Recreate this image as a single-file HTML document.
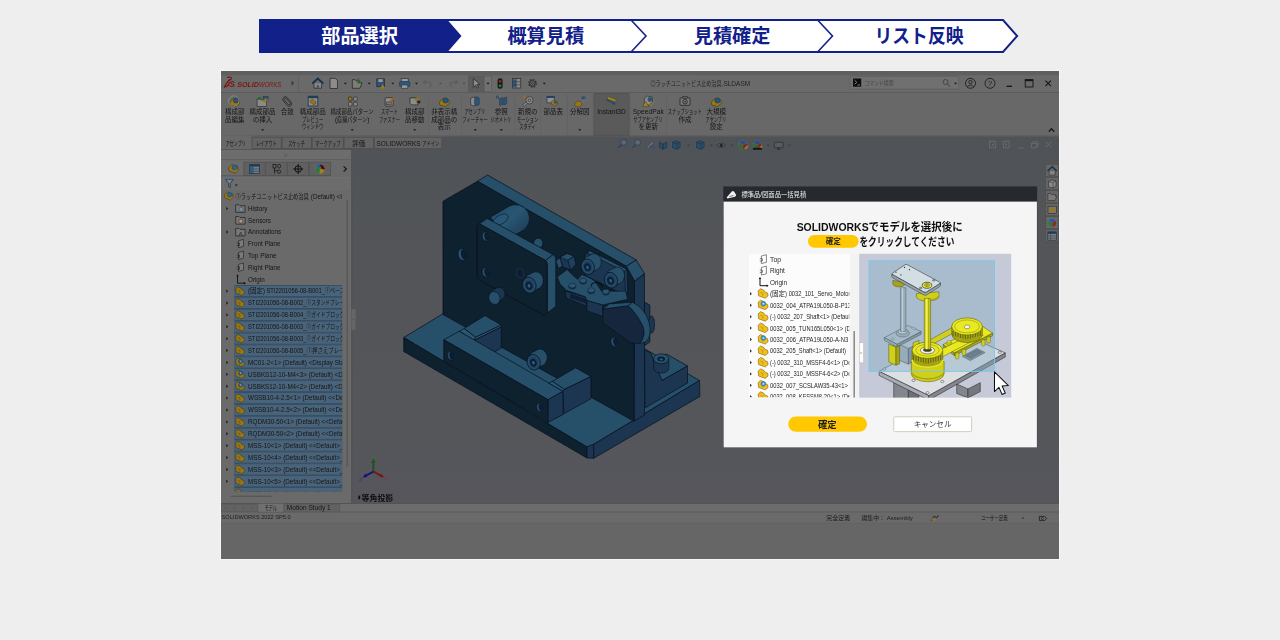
<!DOCTYPE html>
<html><head><meta charset="utf-8"><title>SOLIDWORKS</title>
<style>
html,body{margin:0;padding:0;background:#eeeeee;}
body{width:1280px;height:640px;overflow:hidden;font-family:"Liberation Sans","Noto Sans CJK JP",sans-serif;}
svg{display:block;position:absolute;left:0;top:0;}
svg text{font-family:"Liberation Sans","Noto Sans CJK JP",sans-serif;}
</style></head><body>
<svg width="1280" height="640" viewBox="0 0 1280 640">
<polygon points="259,19 1003.5,19 1018.5,36 1003.5,53 259,53" fill="#ffffff" stroke="none"/>
<polygon points="259,19 448,19 448,20.5 461.5,36 448,51.5 448,53 259,53" fill="#12208a"/>
<polygon points="260,20 1003,20 1017.2,36 1003,52 260,52" fill="none" stroke="#12208a" stroke-width="2" stroke-linejoin="miter"/>
<polyline points="631.5,20.5 646.0,36 631.5,51.5" fill="none" stroke="#12208a" stroke-width="1.6"/>
<polyline points="818,20.5 832.5,36 818,51.5" fill="none" stroke="#12208a" stroke-width="1.6"/>
<text x="321.2" y="43.3" font-size="19.2" font-weight="bold" fill="#ffffff" textLength="76.8" lengthAdjust="spacingAndGlyphs">部品選択</text>
<text x="507.4" y="43.3" font-size="19.2" font-weight="bold" fill="#12208a" textLength="76.8" lengthAdjust="spacingAndGlyphs">概算見積</text>
<text x="693.7" y="43.3" font-size="19.2" font-weight="bold" fill="#12208a" textLength="76.8" lengthAdjust="spacingAndGlyphs">見積確定</text>
<text x="874.5" y="43.3" font-size="19.2" font-weight="bold" fill="#12208a" textLength="89" lengthAdjust="spacingAndGlyphs">リスト反映</text>
<defs><filter id="bl" x="-2%" y="-2%" width="104%" height="104%"><feGaussianBlur stdDeviation="0.33"/></filter><filter id="bl2"><feGaussianBlur stdDeviation="0.25"/></filter><clipPath id="treeclip"><rect x="221" y="150" width="121.2" height="341.3"/></clipPath></defs>
<rect x="220" y="70" width="840" height="490" fill="#f6f6f6" />
<g filter="url(#bl)">
<rect x="221" y="71" width="838" height="488" fill="#676767" />
<rect x="221" y="71" width="838" height="4.5" fill="#5e5e5e" />
<rect x="221" y="75.5" width="838" height="17" fill="#6b6b6b" />
<rect x="221" y="92" width="838" height="1" fill="#5c5c5c" />
<rect x="221" y="93" width="838" height="43" fill="#686868" />
<rect x="221" y="135.5" width="838" height="1" fill="#5a5a5a" />
<rect x="221" y="136.5" width="221" height="12.5" fill="#676767" />
<linearGradient id="vg" gradientUnits="userSpaceOnUse" x1="0" y1="136" x2="0" y2="503"><stop offset="0" stop-color="#505358"/><stop offset="1" stop-color="#56575b"/></linearGradient>
<rect x="442" y="136.5" width="617" height="367" fill="url(#vg)" />
<rect x="352" y="149" width="707" height="354.5" fill="url(#vg)" />
<rect x="221" y="149.5" width="131" height="354" fill="#6a6a6a" />
<rect x="221" y="148.8" width="131" height="1.2" fill="#565656" />
<rect x="351.2" y="149" width="1" height="354" fill="#4c4c4c" />
<rect x="221" y="503.5" width="838" height="8.5" fill="#6c6c6c" />
<rect x="221" y="503" width="838" height="0.8" fill="#4e4e4e" />
<rect x="221" y="512" width="838" height="11" fill="#6b6b6b" />
<rect x="221" y="511.6" width="838" height="0.7" fill="#555" />
<rect x="221" y="522.8" width="838" height="0.7" fill="#5a5a5a" />
<rect x="221" y="523.5" width="838" height="35.5" fill="#666666" />
<g fill="none" stroke="#7e1512" stroke-width="1.25" stroke-linecap="round"><path d="M227.6,77.4q3.4,-1 3.9,0.7q0.1,1.5 -2.5,2.3"/><path d="M229.6,79.6q-2.6,2.6 -5.4,7.6"/><path d="M224.6,86.9q4.2,0 4.6,-4.6"/></g>
<text x="229.3" y="87.3" font-size="8.6" font-weight="bold" font-style="italic" fill="#7e1512">S</text>
<text x="237.2" y="86.6" font-size="7.4" font-weight="bold" font-style="italic" fill="#7e1512" textLength="21.6" lengthAdjust="spacingAndGlyphs">SOLID</text>
<text x="258.9" y="86.6" font-size="7.4" font-style="italic" fill="#7e1512" textLength="22.4" lengthAdjust="spacingAndGlyphs">WORKS</text>
<path d="M291.5,80.5l2.6,2.7l-2.6,2.7z" fill="#3a3a3a"/>
<rect x="298" y="76" width="0.8" height="16" fill="#5e5e5e" />
<path d="M312.3,83.5l5.5,-5l5.5,5" fill="none" stroke="#17304a" stroke-width="1.7"/><path d="M314,83.5v4.7h7.6v-4.7" fill="#8a8a8a" stroke="#2a2a2a" stroke-width="0.8"/><rect x="316.6" y="85" width="2.4" height="3.2" fill="#555"/>
<path d="M330,78.3h5.2l2.3,2.4v7.8h-7.5z" fill="#8c8c8c" stroke="#2a2a2a" stroke-width="0.8"/>
<path d="M343.8,82.8h3l-1.5,1.7z" fill="#141414"/>
<path d="M352.3,88.3v-8.6h3l1,1.2h3.2v2h2.6l-2.2,5.4z" fill="#7d7d78" stroke="#2a2a2a" stroke-width="0.8"/><path d="M357.6,78.2v3.4l-1.3,0l2.1,2.3l2.1,-2.3h-1.3v-3.4z" fill="#2c6a2c"/>
<path d="M367.7,82.8h3l-1.5,1.7z" fill="#141414"/>
<rect x="376.8" y="78.8" width="7.6" height="8" fill="#2d4f78" stroke="#222" stroke-width="0.6"/><rect x="378.3" y="79.2" width="4.4" height="2.8" fill="#999"/><path d="M380,88.6l2.6,-4.6l2.6,4.6z" fill="#9a7a14"/>
<path d="M391.3,82.8h3l-1.5,1.7z" fill="#141414"/>
<rect x="401.2" y="78.6" width="7" height="3.4" fill="#989898" stroke="#2a2a2a" stroke-width="0.6"/><rect x="399.6" y="81.6" width="10.2" height="5" rx="1" fill="#2d5a85" stroke="#1b2d44" stroke-width="0.6"/><rect x="401.6" y="85" width="6.2" height="3.2" fill="#9a9a9a" stroke="#2a2a2a" stroke-width="0.5"/>
<path d="M415.0,82.8h3l-1.5,1.7z" fill="#141414"/>
<path d="M425.3,80.2l-2,2.2l2.6,1.2 M423.6,82.2h5q2.6,0.4 2.4,3q-0.4,1.6 -2.2,2" fill="none" stroke="#5b5b5b" stroke-width="1.2"/>
<path d="M438.9,82.8h3l-1.5,1.7z" fill="#4a4a4a"/>
<path d="M455.8,80.2l2,2.2l-2.6,1.2 M457.5,82.2h-5q-2.6,0.4 -2.4,3q0.4,1.6 2.2,2" fill="none" stroke="#5b5b5b" stroke-width="1.2"/>
<path d="M462.5,82.8h3l-1.5,1.7z" fill="#4a4a4a"/>
<rect x="468.3" y="76.2" width="15.8" height="15.2" fill="#5c5c5c" stroke="#555" stroke-width="0.5"/><rect x="484.1" y="76.2" width="7.2" height="15.2" fill="#6f6f6f" stroke="#585858" stroke-width="0.5"/>
<path d="M473.3,78.6v8.6l2.2,-2l1.6,3l1.3,-0.7l-1.5,-2.9l2.9,-0.3z" fill="#8d8d8d" stroke="#222" stroke-width="0.7"/>
<path d="M486.5,82.8h3l-1.5,1.7z" fill="#141414"/>
<rect x="497.6" y="78.2" width="5" height="10.6" rx="2.5" fill="#151515"/><circle cx="500.1" cy="81.2" r="1.5" fill="#8c2a22"/><circle cx="500.1" cy="85.8" r="1.5" fill="#2c7a36"/>
<rect x="512.4" y="78.6" width="8.4" height="9.4" fill="#888" stroke="#2a2a2a" stroke-width="0.7"/><rect x="513" y="79.3" width="3" height="8" fill="#2d5a85"/><path d="M512.4,81.8h8.4M512.4,84.8h8.4M516.3,78.6v9.4" stroke="#2a2a2a" stroke-width="0.5"/>
<circle cx="532.5" cy="83.3" r="3.6" fill="none" stroke="#2a2a2a" stroke-width="1.5" stroke-dasharray="1.6 1.2"/><circle cx="532.5" cy="83.3" r="2.7" fill="none" stroke="#2a2a2a" stroke-width="0.8"/><circle cx="532.5" cy="83.3" r="1.1" fill="none" stroke="#2a2a2a" stroke-width="0.6"/>
<path d="M542.8,82.8h3l-1.5,1.7z" fill="#141414"/>
<text x="650.5" y="85.8" font-size="6.5" fill="#222" textLength="71" lengthAdjust="spacingAndGlyphs">◎ラッチユニットビス止め治具</text>
<text x="721.61" y="85.8" font-size="6.5" fill="#222" font-weight="normal" text-anchor="start"  xml:space="preserve">.SLDASM</text>
<rect x="850.3" y="76.3" width="108.5" height="13" rx="1" fill="#6f6f6f" stroke="#5a5a5a" stroke-width="0.6"/><rect x="853" y="78.5" width="8.2" height="8.2" fill="#0e0e0e"/><path d="M854.6,80.3l2.2,2l-2.2,2M857.5,85h2.5" stroke="#999" stroke-width="0.8" fill="none"/>
<text x="864.5" y="85.3" font-size="6.2" fill="#484848" textLength="29" lengthAdjust="spacingAndGlyphs">コマンド検索</text>
<circle cx="945.6" cy="82" r="2.5" fill="none" stroke="#3f3f3f" stroke-width="0.8"/><path d="M947.4,83.9l2.6,2.8" stroke="#3f3f3f" stroke-width="1"/>
<path d="M954.1,82.8h3l-1.5,1.7z" fill="#141414"/>
<circle cx="970.5" cy="83.3" r="5" fill="none" stroke="#1c1c1c" stroke-width="0.9"/><circle cx="970.5" cy="82" r="1.7" fill="none" stroke="#1c1c1c" stroke-width="0.8"/><path d="M967.3,87q3.2,-4 6.4,0" fill="none" stroke="#1c1c1c" stroke-width="0.8"/>
<circle cx="990" cy="83.3" r="5" fill="none" stroke="#1c1c1c" stroke-width="0.9"/><text x="990" y="86.3" font-size="8" text-anchor="middle" fill="#1c1c1c">?</text>
<path d="M1006.6,86.3h5.4" stroke="#151515" stroke-width="1.3"/>
<rect x="1025.2" y="79.6" width="7.8" height="7.4" fill="none" stroke="#151515" stroke-width="0.9"/><path d="M1025.2,80.4h7.8" stroke="#151515" stroke-width="1.6"/>
<path d="M1045.4,80.6l5.6,5.6M1051,80.6l-5.6,5.6" stroke="#151515" stroke-width="1.1"/>
<rect x="594" y="93.3" width="35" height="42" fill="#5a5a5a" stroke="#4e4e4e" stroke-width="0.7"/>
<rect x="428.2" y="94" width="0.8" height="41" fill="#626262" />
<rect x="461" y="94" width="0.8" height="41" fill="#626262" />
<rect x="514.6" y="94" width="0.8" height="41" fill="#626262" />
<rect x="540.2" y="94" width="0.8" height="41" fill="#626262" />
<rect x="566.8" y="94" width="0.8" height="41" fill="#626262" />
<rect x="592.7" y="94" width="0.8" height="41" fill="#626262" />
<rect x="630.3" y="94" width="0.8" height="41" fill="#626262" />
<rect x="666.2" y="94" width="0.8" height="41" fill="#626262" />
<path d="M229.8,102.0l4,-3.5l5.5,1.5l0.5,3.5l-4,3l-5.5,-1.5z" fill="#9a7612" stroke="#3a2c08" stroke-width="0.5"/><circle cx="236.0" cy="100.5" r="2.6" fill="#2a5579" stroke="#1a2e44" stroke-width="0.5"/>
<circle cx="233.8" cy="101.0" r="5.2" fill="none" stroke="#8f8f8f" stroke-width="0.7"/>
<text x="225.05" y="114.3" font-size="6.5" fill="#151515" textLength="19.5" lengthAdjust="spacingAndGlyphs">構成部</text>
<text x="225.05" y="121.7" font-size="6.5" fill="#151515" textLength="19.5" lengthAdjust="spacingAndGlyphs">品編集</text>
<path d="M257.1,106.5v-7.5h3.5l1,1h5v6.5z" fill="#8a8a86" stroke="#222" stroke-width="0.6"/><rect x="263.1" y="96.3" width="5" height="4" fill="#2a5579" stroke="#1a2e44" stroke-width="0.4"/><path d="M258.1,97.0h3v3h-3z" fill="#2d6a2d"/><path d="M261.6,101.0l4,-2.5l2.5,1l-3,3z" fill="#9a7612"/>
<text x="249.6" y="114.3" font-size="6.5" fill="#151515" textLength="26" lengthAdjust="spacingAndGlyphs">構成部品</text>
<text x="252.85" y="121.7" font-size="6.5" fill="#151515" textLength="19.5" lengthAdjust="spacingAndGlyphs">の挿入</text>
<path d="M261.1,129.3h3l-1.5,1.7z" fill="#141414"/>
<g fill="none" stroke="#303030" stroke-width="0.9" transform="rotate(-40 287.2 101.5)"><rect x="284.59999999999997" y="96.0" width="5.2" height="11" rx="2.6"/><rect x="286.0" y="97.7" width="2.6" height="8" rx="1.3"/></g>
<text x="280.7" y="114.3" font-size="6.5" fill="#151515" textLength="13" lengthAdjust="spacingAndGlyphs">合致</text>
<rect x="308.2" y="96.2" width="9.6" height="9.8" fill="#8d8d8d" stroke="#1e3a58" stroke-width="0.9"/><rect x="308.2" y="96.2" width="9.6" height="2" fill="#1e3a58"/><path d="M310.3,100.5l2,-1.4l3.4,2.4l0.2,2.2l-2.2,1l-3.4,-2.4z" fill="#9a7612" stroke="#3a2c08" stroke-width="0.4"/>
<text x="299.8" y="114.3" font-size="6.5" fill="#151515" textLength="26" lengthAdjust="spacingAndGlyphs">構成部品</text>
<text x="302.07" y="121.7" font-size="6.5" fill="#151515" textLength="21.2" lengthAdjust="spacingAndGlyphs">プレビュー</text>
<text x="302.07" y="129.1" font-size="6.5" fill="#151515" textLength="21.2" lengthAdjust="spacingAndGlyphs">ウィンドウ</text>
<rect x="348.4" y="97.1" width="3.6" height="3.8" rx="0.9" fill="#9a7612" stroke="#222" stroke-width="0.6"/>
<rect x="353.59999999999997" y="97.1" width="3.6" height="3.8" rx="0.9" fill="#8a8a8a" stroke="#222" stroke-width="0.6"/>
<rect x="348.4" y="102.3" width="3.6" height="3.8" rx="0.9" fill="#8a8a8a" stroke="#222" stroke-width="0.6"/>
<rect x="353.59999999999997" y="102.3" width="3.6" height="3.8" rx="0.9" fill="#8a8a8a" stroke="#222" stroke-width="0.6"/>
<text x="330.62" y="114.3" font-size="6.5" fill="#151515" textLength="43" lengthAdjust="spacingAndGlyphs">構成部品パターン</text>
<text x="334.96" y="121.7" font-size="6.5" fill="#151515" font-weight="normal" text-anchor="start"  xml:space="preserve">(</text>
<text x="337.12" y="121.7" font-size="6.5" fill="#151515" textLength="30" lengthAdjust="spacingAndGlyphs">直線パターン</text>
<text x="367.28" y="121.7" font-size="6.5" fill="#151515" font-weight="normal" text-anchor="start"  xml:space="preserve">)</text>
<path d="M350.7,129.3h3l-1.5,1.7z" fill="#141414"/>
<rect x="385.1" y="97.7" width="8" height="8.4" rx="1" fill="#8d8d8d" stroke="#222" stroke-width="0.7"/><path d="M387.1,104.0l6.5,-7l1.2,1.2l-6.2,7z" fill="#a85f14"/><rect x="386.6" y="102.0" width="4.6" height="2.8" fill="#777" stroke="#222" stroke-width="0.4"/>
<text x="381.02" y="114.3" font-size="6.5" fill="#151515" textLength="16.6" lengthAdjust="spacingAndGlyphs">スマート</text>
<text x="378.88" y="121.7" font-size="6.5" fill="#151515" textLength="21.2" lengthAdjust="spacingAndGlyphs">ファスナー</text>
<path d="M410.0,97.9h6.2l1.6,1.6v5.4h-6.2l-1.6,-1.6z" fill="#8d8d8d" stroke="#222" stroke-width="0.7"/><path d="M413.8,99.9l3.8,-2.4l2.4,1.4l-3.8,2.4z" fill="#9a7612"/><path d="M415.8,102.0l3,-1v-1l2,2l-2,2v-1z" fill="#222"/>
<text x="405.05" y="114.3" font-size="6.5" fill="#151515" textLength="19.5" lengthAdjust="spacingAndGlyphs">構成部</text>
<text x="405.05" y="121.7" font-size="6.5" fill="#151515" textLength="19.5" lengthAdjust="spacingAndGlyphs">品移動</text>
<path d="M413.3,129.3h3l-1.5,1.7z" fill="#141414"/>
<path d="M439.3,102.0l4,-3.5l5.5,1.5l0.5,3.5l-4,3l-5.5,-1.5z" fill="#9a7612" stroke="#3a2c08" stroke-width="0.5"/><circle cx="445.5" cy="100.5" r="2.6" fill="#2a5579" stroke="#1a2e44" stroke-width="0.5"/>
<text x="431.3" y="114.3" font-size="6.5" fill="#151515" textLength="26" lengthAdjust="spacingAndGlyphs">非表示構</text>
<text x="431.3" y="121.7" font-size="6.5" fill="#151515" textLength="26" lengthAdjust="spacingAndGlyphs">成部品の</text>
<text x="437.8" y="129.1" font-size="6.5" fill="#151515" textLength="13" lengthAdjust="spacingAndGlyphs">表示</text>
<path d="M470.59999999999997,98.5l3,-1.6l3,1.6v6l-3,1.6l-3,-1.6z" fill="#8a8a8a" stroke="#222" stroke-width="0.6"/><rect x="474.59999999999997" y="96.9" width="4.6" height="8.6" rx="2" fill="#2a5579" stroke="#1a2e44" stroke-width="0.5"/>
<text x="464.47" y="114.3" font-size="6.5" fill="#151515" textLength="20.6" lengthAdjust="spacingAndGlyphs">アセンブリ</text>
<text x="462.33" y="121.7" font-size="6.5" fill="#151515" textLength="25.4" lengthAdjust="spacingAndGlyphs">フィーチャー</text>
<path d="M473.7,129.3h3l-1.5,1.7z" fill="#141414"/>
<path d="M499.7,98.7l3,-1.2v7l-3,1.2z M503.7,98.1l3,-1.2v7l-3,1.2z" fill="#2a5579" stroke="#1a2e44" stroke-width="0.4"/><circle cx="497.3" cy="97.1" r="1.1" fill="none" stroke="#1e3a58" stroke-width="0.7"/><path d="M498.1,98.0l2,2.2" stroke="#1e3a58" stroke-width="0.6"/>
<text x="494.8" y="114.3" font-size="6.5" fill="#151515" textLength="13" lengthAdjust="spacingAndGlyphs">参照</text>
<text x="490.57" y="121.7" font-size="6.5" fill="#151515" textLength="20.6" lengthAdjust="spacingAndGlyphs">ジオメトリ</text>
<path d="M499.8,129.3h3l-1.5,1.7z" fill="#141414"/>
<circle cx="529.4" cy="100.3" r="3.7" fill="#858585" stroke="#333" stroke-width="0.7"/><circle cx="529.4" cy="100.3" r="1.3" fill="none" stroke="#333" stroke-width="0.6"/><path d="M522.8,104.9l3,-3l1.6,1.6l-3,3z" fill="#858585" stroke="#333" stroke-width="0.6"/><circle cx="524.3" cy="97.2" r="1.4" fill="#a06a18"/>
<text x="518.05" y="114.3" font-size="6.5" fill="#151515" textLength="19.5" lengthAdjust="spacingAndGlyphs">新規の</text>
<text x="517.07" y="121.7" font-size="6.5" fill="#151515" textLength="21.2" lengthAdjust="spacingAndGlyphs">モーション</text>
<text x="519.22" y="129.1" font-size="6.5" fill="#151515" textLength="16.4" lengthAdjust="spacingAndGlyphs">スタディ</text>
<rect x="547.0" y="96.3" width="7.6" height="6.6" fill="#8f8f8f" stroke="#1e3a58" stroke-width="0.7"/><rect x="547.0" y="96.3" width="7.6" height="1.6" fill="#1e3a58"/><path d="M551.2,101.7l2.6,-1.8l3.8,2.2v2.2l-2.6,1.6l-3.8,-2.2z" fill="#9a7612" stroke="#3a2c08" stroke-width="0.4"/><circle cx="555.4000000000001" cy="102.3" r="1.5" fill="#2a5579"/>
<text x="543.45" y="114.3" font-size="6.5" fill="#151515" textLength="19.5" lengthAdjust="spacingAndGlyphs">部品表</text>
<path d="M574.8,103.5l3,-2.6l4,1.4v2.6l-3,2.2l-4,-1.4z" fill="#9a7612" stroke="#3a2c08" stroke-width="0.4"/><path d="M581.1999999999999,97.1l2,-1.2l2.4,0.8v1.6l-2,1.2l-2.4,-0.8z" fill="#2a5579"/><path d="M583.0,99.9v2.4h-1.4" fill="none" stroke="#7a7a7a" stroke-width="0.5"/>
<text x="570.05" y="114.3" font-size="6.5" fill="#151515" textLength="19.5" lengthAdjust="spacingAndGlyphs">分解図</text>
<path d="M578.3,129.3h3l-1.5,1.7z" fill="#141414"/>
<path d="M607.5,96.5l8.4,3v2.6l-8.4,-3z" fill="#a08a1c" stroke="#4a3c08" stroke-width="0.4"/><path d="M606.3,99.7l7.6,3.4" stroke="#1e4a78" stroke-width="1.3"/><path d="M612.9,101.7l3.6,2.6l-4.4,0.2z" fill="#1e4a78"/>
<text x="611.5" y="114.3" font-size="6.7" fill="#151515" font-weight="normal" text-anchor="middle" >Instant3D</text>
<path d="M644.3,98.5l3.4,-2.4l4.6,1v5.6l-3.4,2.4l-4.6,-1z" fill="#8d8d8d" stroke="#222" stroke-width="0.6"/><circle cx="649.9" cy="99.5" r="2.4" fill="#2a5579"/><path d="M642.6999999999999,106.5l3,-5.2l3,5.2z" fill="#a48414" stroke="#2a2a2a" stroke-width="0.4"/><path d="M648.9,103.5l2,1.8l3,-3.6" fill="none" stroke="#a48414" stroke-width="1"/>
<text x="648.3" y="114.3" font-size="6.7" fill="#151515" font-weight="normal" text-anchor="middle" >SpeedPak</text>
<text x="633.28" y="121.7" font-size="6.5" fill="#151515" textLength="29.2" lengthAdjust="spacingAndGlyphs">サブアセンブリ</text>
<text x="638.55" y="129.1" font-size="6.5" fill="#151515" textLength="19.5" lengthAdjust="spacingAndGlyphs">を更新</text>
<rect x="680" y="97.9" width="10" height="7.4" rx="0.8" fill="#7b7b7b" stroke="#222" stroke-width="0.8"/><rect x="683" y="96.5" width="4" height="1.6" fill="#7b7b7b" stroke="#222" stroke-width="0.6"/><circle cx="685" cy="101.7" r="2.3" fill="none" stroke="#222" stroke-width="0.8"/><circle cx="685" cy="101.7" r="0.8" fill="#222"/>
<text x="667.84" y="114.3" font-size="6.5" fill="#151515" textLength="33.8" lengthAdjust="spacingAndGlyphs">スナップショット</text>
<text x="678.5" y="121.7" font-size="6.5" fill="#151515" textLength="13" lengthAdjust="spacingAndGlyphs">作成</text>
<path d="M711.3,102.0l4,-3.5l5.5,1.5l0.5,3.5l-4,3l-5.5,-1.5z" fill="#9a7612" stroke="#3a2c08" stroke-width="0.5"/><circle cx="717.5" cy="100.5" r="2.6" fill="#2a5579" stroke="#1a2e44" stroke-width="0.5"/>
<text x="706.55" y="114.3" font-size="6.5" fill="#151515" textLength="19.5" lengthAdjust="spacingAndGlyphs">大規模</text>
<text x="705.57" y="121.7" font-size="6.5" fill="#151515" textLength="20.6" lengthAdjust="spacingAndGlyphs">アセンブリ</text>
<text x="709.8" y="129.1" font-size="6.5" fill="#151515" textLength="13" lengthAdjust="spacingAndGlyphs">設定</text>
<path d="M1048.8,131.6l2.7,-2.8l2.7,2.8" fill="none" stroke="#151515" stroke-width="1.3"/>
<rect x="221" y="135.5" width="30.19999999999999" height="13.5" fill="#686868" />
<text x="225.38" y="145.6" font-size="6.5" fill="#151515" textLength="20.6" lengthAdjust="spacingAndGlyphs">アセンブリ</text>
<rect x="252" y="137.2" width="29.30000000000001" height="11.4" fill="#636363" stroke="#4c4c4c" stroke-width="0.8"/>
<text x="255.92" y="145.6" font-size="6.5" fill="#151515" textLength="20.8" lengthAdjust="spacingAndGlyphs">レイアウト</text>
<rect x="282" y="137.2" width="29.5" height="11.4" fill="#636363" stroke="#4c4c4c" stroke-width="0.8"/>
<text x="288.17" y="145.6" font-size="6.5" fill="#151515" textLength="16.8" lengthAdjust="spacingAndGlyphs">スケッチ</text>
<rect x="312.2" y="137.2" width="31.100000000000023" height="11.4" fill="#636363" stroke="#4c4c4c" stroke-width="0.8"/>
<text x="314.88" y="145.6" font-size="6.5" fill="#151515" textLength="25.7" lengthAdjust="spacingAndGlyphs">マークアップ</text>
<rect x="344" y="137.2" width="29.5" height="11.4" fill="#636363" stroke="#4c4c4c" stroke-width="0.8"/>
<text x="352.25" y="145.6" font-size="6.5" fill="#151515" textLength="13" lengthAdjust="spacingAndGlyphs">評価</text>
<rect x="374.2" y="137.2" width="67.60000000000002" height="11.4" fill="#636363" stroke="#4c4c4c" stroke-width="0.8"/>
<text x="376.49" y="145.6" font-size="6.5" fill="#151515" font-weight="normal" text-anchor="start"  xml:space="preserve">SOLIDWORKS </text>
<text x="422.35" y="145.6" font-size="6.5" fill="#151515" textLength="17" lengthAdjust="spacingAndGlyphs">アドイン</text>
<g transform="translate(0,0.8)">
<circle cx="623.7" cy="141.6" r="3" fill="#5d6670" stroke="#27425e" stroke-width="0.8"/><path d="M621.5,144l-3,3" stroke="#27425e" stroke-width="1.3"/>
<circle cx="637.7" cy="141.6" r="3" fill="#5d6670" stroke="#27425e" stroke-width="0.8"/><path d="M635.5,144l-3,3" stroke="#27425e" stroke-width="1.3"/>
<path d="M646,147l6,-6.4l2,1.4l-5,5.6z" fill="#6a7076" stroke="#2a3a4a" stroke-width="0.5"/><path d="M654,146h-4.5l1.5,-1.6" fill="none" stroke="#27527e" stroke-width="1"/>
<path d="M659.5,141.4l3,1.6v5.4l-3,-1.6z M663.4,143l3.4,-1.8v5.4l-3.4,1.8z" fill="#27506e" stroke="#16283a" stroke-width="0.5"/>
<path d="M672.5,141.6l3,-1.6l4.6,1.4v5.2l-3,1.8l-4.6,-1.4z" fill="#28506e" stroke="#16283a" stroke-width="0.5"/><path d="M672.5,141.6l4.6,1.4l3,-1.6 M677.1,143v5.4" fill="none" stroke="#16283a" stroke-width="0.5"/>
<path d="M696.5,141.6l3,-1.6l4.6,1.4v5.2l-3,1.8l-4.6,-1.4z" fill="#28506e" stroke="#16283a" stroke-width="0.5"/><path d="M696.5,141.6l4.6,1.4l3,-1.6 M701.1,143v5.4" fill="none" stroke="#16283a" stroke-width="0.5"/>
<path d="M687.0,143.9h3l-1.5,1.7z" fill="#3a3c40"/>
<path d="M710.0,143.9h3l-1.5,1.7z" fill="#3a3c40"/>
<path d="M730.5,143.9h3l-1.5,1.7z" fill="#3a3c40"/>
<path d="M766.5,143.9h3l-1.5,1.7z" fill="#3a3c40"/>
<path d="M788.0,143.9h3l-1.5,1.7z" fill="#3a3c40"/>
<path d="M716.5,144.6q4.5,-4.4 9,0q-4.5,4 -9,0z" fill="#5b5e62" stroke="#2d2f33" stroke-width="0.7"/><circle cx="721.3" cy="144.6" r="1.7" fill="#26282c"/>
<circle cx="742.8" cy="144.2" r="4.2" fill="#8f8f8f"/><path d="M742.8,144.2l-3.7,-2a4.2,4.2 0 0 1 7.4,0z" fill="#2a4f8a"/><path d="M742.8,144.2l3.7,-2a4.2,4.2 0 0 1 -3.7,6.2z" fill="#7a2a24"/><path d="M742.8,144.2v4.2a4.2,4.2 0 0 1 -3.7,-6.2z" fill="#2d6a34"/><path d="M744.3,147.5l3,-2.8l1.2,1.2l-3,2.8z" fill="#a08214"/>
<circle cx="757.2" cy="144.2" r="4.2" fill="#8f8f8f"/><path d="M757.2,144.2l-3.7,-2a4.2,4.2 0 0 1 7.4,0z" fill="#2a4f8a"/><path d="M757.2,144.2l3.7,-2a4.2,4.2 0 0 1 -3.7,6.2z" fill="#7a2a24"/><path d="M757.2,144.2v4.2a4.2,4.2 0 0 1 -3.7,-6.2z" fill="#2d6a34"/><path d="M758.7,147.5l3,-2.8l1.2,1.2l-3,2.8z" fill="#a08214"/>
<rect x="753" y="147" width="9" height="2" fill="#18191b"/>
<rect x="774.3" y="141.4" width="8.8" height="5.6" rx="0.8" fill="#595c61" stroke="#303236" stroke-width="0.9"/><path d="M777,149l1.7,-2l1.7,2z" fill="#26282c"/>
</g>
<g fill="none" stroke="#6b6e73" stroke-width="0.8"><rect x="989.5" y="141.2" width="5.8" height="6.6"/><rect x="1003.3" y="141.2" width="5.8" height="6.6"/><path d="M1018.5,148h5"/><rect x="1031.3" y="143.4" width="5" height="4.4"/><path d="M1033,143.4v-1.6h5v4.4h-1.7"/><path d="M1046,141.6l5.4,5.6M1051.4,141.6l-5.4,5.6"/></g>
<path d="M993.6,143.2l-2,1.4l2,1.4z M1005.3,143.2l2,1.4l-2,1.4z" fill="#6b6e73"/>
<rect x="221" y="150" width="130" height="9.3" fill="#6d6d6d" />
<rect x="221" y="159.3" width="130" height="0.7" fill="#5c5c5c" />
<circle cx="285.7" cy="155.4" r="1.3" fill="none" stroke="#555" stroke-width="0.6"/>
<rect x="221" y="162" width="23" height="14" fill="#6c6c6c" />
<rect x="243.8" y="162.2" width="21.4" height="13.2" fill="#606060" stroke="#515151" stroke-width="0.7"/>
<rect x="265.7" y="162.2" width="21.4" height="13.2" fill="#606060" stroke="#515151" stroke-width="0.7"/>
<rect x="287.5" y="162.2" width="21.4" height="13.2" fill="#606060" stroke="#515151" stroke-width="0.7"/>
<rect x="309.3" y="162.2" width="21.4" height="13.2" fill="#606060" stroke="#515151" stroke-width="0.7"/>
<path d="M221,175.7h110" stroke="#515151" stroke-width="0.7"/>
<g transform="translate(233.5,169) scale(1.05)"><path d="M-4.8,-1.2l3.2,-3l5.6,2l0.8,3.2l-3.2,3l-5.6,-2z" fill="#96761a" stroke="#3d2e06" stroke-width="0.5"/><path d="M-1.4,-2.6l2.2,-1.4l2.6,1v2.6l-2.2,1.4l-2.6,-1z" fill="#2a6690" stroke="#193650" stroke-width="0.4"/></g>
<rect x="249.5" y="164.6" width="10" height="8.8" fill="#7c7c7c" stroke="#1e3a58" stroke-width="0.8"/><rect x="249.5" y="164.6" width="10" height="2" fill="#1e3a58"/><path d="M249.5,169h10M249.5,171.3h10M253,166.6v6.8" stroke="#1e3a58" stroke-width="0.6"/><rect x="250" y="167" width="2.8" height="6" fill="#2a5c86"/>
<g fill="none" stroke="#1c1c1c" stroke-width="0.8"><rect x="273" y="164.4" width="3" height="3.6"/><rect x="277.6" y="164.4" width="3" height="3.6" rx="1.4"/><path d="M274.5,168v5.6M274.5,170.6h3.2"/><circle cx="279" cy="171.6" r="1.7"/></g>
<g fill="none" stroke="#111" stroke-width="1"><circle cx="298.2" cy="169" r="3.2"/><path d="M298.2,164v10M293.2,169h10"/></g>
<circle cx="320" cy="168.8" r="4.6" fill="#8a8a8a"/><path d="M320,168.8l-4,-2.3a4.6,4.6 0 0 1 6,-1.9z" fill="#2a5a9a"/><path d="M320,168.8l2,-4.2a4.6,4.6 0 0 1 2.5,5.4z" fill="#8a2620"/><path d="M320,168.8l4.5,1.2a4.6,4.6 0 0 1 -5,3.4z" fill="#a08214"/><path d="M320,168.8l-0.5,4.6a4.6,4.6 0 0 1 -3.5,-6.9z" fill="#2d7a34"/><path d="M320.5,165l3.5,4" stroke="#111" stroke-width="1.4"/>
<path d="M343.6,166.4l2.8,2.6l-2.8,2.6" fill="none" stroke="#151515" stroke-width="1.1"/>
<rect x="223.8" y="177.3" width="125" height="11.6" fill="#6c6c6c" stroke="#747474" stroke-width="0.7"/>
<path d="M225.6,179.6h7.6l-3,3.6v4.4l-1.6,-1v-3.4z" fill="#7d8890" stroke="#1e3246" stroke-width="0.8"/><path d="M225.4,179.4h8" stroke="#2a5a84" stroke-width="1.2"/>
<path d="M234.7,184.5h3l-1.5,1.7z" fill="#141414"/>
<g transform="translate(228.8,196.2) scale(0.95)"><path d="M-4.8,-1.2l3.2,-3l5.6,2l0.8,3.2l-3.2,3l-5.6,-2z" fill="#96761a" stroke="#3d2e06" stroke-width="0.5"/><path d="M-1.4,-2.6l2.2,-1.4l2.6,1v2.6l-2.2,1.4l-2.6,-1z" fill="#2a6690" stroke="#193650" stroke-width="0.4"/></g>
<g clip-path="url(#treeclip)">
<text x="235.6" y="198.9" font-size="6.5" fill="#151515" textLength="73.2" lengthAdjust="spacingAndGlyphs">①ラッチユニットビス止め治具</text>
<text x="309.05" y="198.9" font-size="6.5" fill="#151515" font-weight="normal" text-anchor="start"  xml:space="preserve" textLength="32.94" lengthAdjust="spacingAndGlyphs"> (Default) &lt;I</text>
<path d="M226.3,206.73l1.9,1.7l-1.9,1.7z" fill="#1a1a1a"/>
<path d="M235.7,212.32999999999998v-7.6h3.2l1,1h5.2v6.6z" fill="#787878" stroke="#1c1c1c" stroke-width="0.7"/><circle cx="241.1" cy="209.32999999999998" r="2.2" fill="#8a8a8a" stroke="#2a5a84" stroke-width="0.7"/>
<text x="248" y="210.73" font-size="6.5" fill="#151515" font-weight="normal" text-anchor="start"  xml:space="preserve" textLength="19.52" lengthAdjust="spacingAndGlyphs">History</text>
<path d="M235.7,224.14v-7.6h3.2l1,1h5.2v6.6z" fill="#787878" stroke="#1c1c1c" stroke-width="0.7"/><circle cx="240.9" cy="221.14" r="2.2" fill="#9a9a9a" stroke="#6a2a20" stroke-width="0.7"/>
<text x="248" y="222.54" font-size="6.5" fill="#151515" font-weight="normal" text-anchor="start"  xml:space="preserve" textLength="23.01" lengthAdjust="spacingAndGlyphs">Sensors</text>
<path d="M226.3,230.35l1.9,1.7l-1.9,1.7z" fill="#1a1a1a"/>
<path d="M235.7,235.95v-7.6h3.2l1,1h5.2v6.6z" fill="#787878" stroke="#1c1c1c" stroke-width="0.7"/><text x="238.5" y="235.54999999999998" font-size="6" font-weight="bold" fill="#1e3a58">A</text>
<text x="248" y="234.35" font-size="6.5" fill="#151515" font-weight="normal" text-anchor="start"  xml:space="preserve" textLength="33.13" lengthAdjust="spacingAndGlyphs">Annotations</text>
<path d="M238.5,240.76l5,-1.4v7l-5,1.4z" fill="#7a7a7a" stroke="#1c1c1c" stroke-width="0.6"/><path d="M236.9,243.16h2.6v2.4h-2.6" fill="none" stroke="#1c1c1c" stroke-width="0.6"/>
<text x="248" y="246.16" font-size="6.5" fill="#151515" font-weight="normal" text-anchor="start"  xml:space="preserve" textLength="32.43" lengthAdjust="spacingAndGlyphs">Front Plane</text>
<path d="M238.5,252.57l5,-1.4v7l-5,1.4z" fill="#7a7a7a" stroke="#1c1c1c" stroke-width="0.6"/><path d="M236.9,254.97h2.6v2.4h-2.6" fill="none" stroke="#1c1c1c" stroke-width="0.6"/>
<text x="248" y="257.96999999999997" font-size="6.5" fill="#151515" font-weight="normal" text-anchor="start"  xml:space="preserve" textLength="28.59" lengthAdjust="spacingAndGlyphs">Top Plane</text>
<path d="M238.5,264.38l5,-1.4v7l-5,1.4z" fill="#7a7a7a" stroke="#1c1c1c" stroke-width="0.6"/><path d="M236.9,266.78h2.6v2.4h-2.6" fill="none" stroke="#1c1c1c" stroke-width="0.6"/>
<text x="248" y="269.78" font-size="6.5" fill="#151515" font-weight="normal" text-anchor="start"  xml:space="preserve" textLength="32.43" lengthAdjust="spacingAndGlyphs">Right Plane</text>
<path d="M237.5,275.19v8h7.4" fill="none" stroke="#0e0e0e" stroke-width="0.9"/><path d="M237.5,274.19l-1.2,2h2.4z M245.9,283.19l-2,-1.2v2.4z" fill="#0e0e0e"/>
<text x="248" y="281.59" font-size="6.5" fill="#151515" font-weight="normal" text-anchor="start"  xml:space="preserve" textLength="16.73" lengthAdjust="spacingAndGlyphs">Origin</text>
<rect x="234.3" y="285.05" width="108" height="11.9" fill="#2f4a63" />
<rect x="234.3" y="285.8" width="108" height="10.4" fill="#4a647a" />
<path d="M226.3,289.4l1.9,1.7l-1.9,1.7z" fill="#1a1a1a"/>
<path d="M235.7,288.7l2,-1.8l2.8,1l1,1.6l2.6,1l0.4,2.6l-2.6,2.2l-5.8,-2.2z" fill="#96761a" stroke="#3d2e06" stroke-width="0.5"/><path d="M237.8,290.1l2.2,0.9l-0.4,2.2" fill="none" stroke="#5a4408" stroke-width="0.5"/>
<text x="248" y="293.4" font-size="6.5" fill="#151515" font-weight="normal" text-anchor="start"  xml:space="preserve">(</text>
<text x="249.93" y="293.4" font-size="6.5" fill="#151515" textLength="13" lengthAdjust="spacingAndGlyphs">固定</text>
<text x="262.93" y="293.4" font-size="6.5" fill="#151515" font-weight="normal" text-anchor="start"  xml:space="preserve" textLength="62.07" lengthAdjust="spacingAndGlyphs">) STI2201056-08-B001_</text>
<text x="325" y="293.4" font-size="6.5" fill="#151515" textLength="19.8" lengthAdjust="spacingAndGlyphs">①ベース</text>
<rect x="234.3" y="296.94" width="108" height="11.9" fill="#2f4a63" />
<rect x="234.3" y="297.69" width="108" height="10.4" fill="#4a647a" />
<path d="M226.3,301.28999999999996l1.9,1.7l-1.9,1.7z" fill="#1a1a1a"/>
<path d="M235.7,300.59l2,-1.8l2.8,1l1,1.6l2.6,1l0.4,2.6l-2.6,2.2l-5.8,-2.2z" fill="#96761a" stroke="#3d2e06" stroke-width="0.5"/><path d="M237.8,301.99l2.2,0.9l-0.4,2.2" fill="none" stroke="#5a4408" stroke-width="0.5"/>
<text x="248" y="305.28999999999996" font-size="6.5" fill="#151515" font-weight="normal" text-anchor="start"  xml:space="preserve" textLength="58.54" lengthAdjust="spacingAndGlyphs">STI2201056-08-B002_</text>
<text x="306.54" y="305.29" font-size="6.5" fill="#151515" textLength="42.3" lengthAdjust="spacingAndGlyphs">①スタンドプレート</text>
<rect x="234.3" y="308.83" width="108" height="11.9" fill="#2f4a63" />
<rect x="234.3" y="309.58" width="108" height="10.4" fill="#4a647a" />
<path d="M226.3,313.17999999999995l1.9,1.7l-1.9,1.7z" fill="#1a1a1a"/>
<path d="M235.7,312.47999999999996l2,-1.8l2.8,1l1,1.6l2.6,1l0.4,2.6l-2.6,2.2l-5.8,-2.2z" fill="#96761a" stroke="#3d2e06" stroke-width="0.5"/><path d="M237.8,313.88l2.2,0.9l-0.4,2.2" fill="none" stroke="#5a4408" stroke-width="0.5"/>
<text x="248" y="317.17999999999995" font-size="6.5" fill="#151515" font-weight="normal" text-anchor="start"  xml:space="preserve" textLength="58.54" lengthAdjust="spacingAndGlyphs">STI2201056-08-B004_</text>
<text x="306.54" y="317.18" font-size="6.5" fill="#151515" textLength="37.8" lengthAdjust="spacingAndGlyphs">①ガイドブロック</text>
<rect x="234.3" y="320.72" width="108" height="11.9" fill="#2f4a63" />
<rect x="234.3" y="321.47" width="108" height="10.4" fill="#4a647a" />
<path d="M226.3,325.07l1.9,1.7l-1.9,1.7z" fill="#1a1a1a"/>
<path d="M235.7,324.37l2,-1.8l2.8,1l1,1.6l2.6,1l0.4,2.6l-2.6,2.2l-5.8,-2.2z" fill="#96761a" stroke="#3d2e06" stroke-width="0.5"/><path d="M237.8,325.77000000000004l2.2,0.9l-0.4,2.2" fill="none" stroke="#5a4408" stroke-width="0.5"/>
<text x="248" y="329.07" font-size="6.5" fill="#151515" font-weight="normal" text-anchor="start"  xml:space="preserve" textLength="58.54" lengthAdjust="spacingAndGlyphs">STI2201056-08-B003_</text>
<text x="306.54" y="329.07" font-size="6.5" fill="#151515" textLength="37.8" lengthAdjust="spacingAndGlyphs">①ガイドブロック</text>
<rect x="234.3" y="332.61" width="108" height="11.9" fill="#2f4a63" />
<rect x="234.3" y="333.36" width="108" height="10.4" fill="#4a647a" />
<path d="M226.3,336.96l1.9,1.7l-1.9,1.7z" fill="#1a1a1a"/>
<path d="M235.7,336.26l2,-1.8l2.8,1l1,1.6l2.6,1l0.4,2.6l-2.6,2.2l-5.8,-2.2z" fill="#96761a" stroke="#3d2e06" stroke-width="0.5"/><path d="M237.8,337.66l2.2,0.9l-0.4,2.2" fill="none" stroke="#5a4408" stroke-width="0.5"/>
<text x="248" y="340.96" font-size="6.5" fill="#151515" font-weight="normal" text-anchor="start"  xml:space="preserve" textLength="58.54" lengthAdjust="spacingAndGlyphs">STI2201056-08-B003_</text>
<text x="306.54" y="340.96" font-size="6.5" fill="#151515" textLength="37.8" lengthAdjust="spacingAndGlyphs">①ガイドブロック</text>
<rect x="234.3" y="344.5" width="108" height="11.9" fill="#2f4a63" />
<rect x="234.3" y="345.25" width="108" height="10.4" fill="#4a647a" />
<path d="M226.3,348.84999999999997l1.9,1.7l-1.9,1.7z" fill="#1a1a1a"/>
<path d="M235.7,348.15l2,-1.8l2.8,1l1,1.6l2.6,1l0.4,2.6l-2.6,2.2l-5.8,-2.2z" fill="#96761a" stroke="#3d2e06" stroke-width="0.5"/><path d="M237.8,349.55l2.2,0.9l-0.4,2.2" fill="none" stroke="#5a4408" stroke-width="0.5"/>
<text x="248" y="352.84999999999997" font-size="6.5" fill="#151515" font-weight="normal" text-anchor="start"  xml:space="preserve" textLength="58.54" lengthAdjust="spacingAndGlyphs">STI2201056-08-B005_</text>
<text x="306.54" y="352.85" font-size="6.5" fill="#151515" textLength="43.5" lengthAdjust="spacingAndGlyphs">①押さえプレート</text>
<rect x="234.3" y="356.39000000000004" width="108" height="11.9" fill="#2f4a63" />
<rect x="234.3" y="357.14000000000004" width="108" height="10.4" fill="#4a647a" />
<path d="M226.3,360.74l1.9,1.7l-1.9,1.7z" fill="#1a1a1a"/>
<path d="M235.7,360.04l2,-1.8l2.8,1l1,1.6l2.6,1l0.4,2.6l-2.6,2.2l-5.8,-2.2z" fill="#96761a" stroke="#3d2e06" stroke-width="0.5"/><path d="M237.8,361.44000000000005l2.2,0.9l-0.4,2.2" fill="none" stroke="#5a4408" stroke-width="0.5"/>
<circle cx="240.6" cy="361.24000000000007" r="2.1" fill="#2a6690" stroke="#193650" stroke-width="0.4"/><circle cx="240.6" cy="361.24000000000007" r="0.8" fill="#7aa6c0"/>
<text x="248" y="364.74" font-size="6.5" fill="#151515" font-weight="normal" text-anchor="start"  xml:space="preserve" textLength="96.05" lengthAdjust="spacingAndGlyphs">MC01-2&lt;1&gt; (Default) &lt;Display Sta</text>
<rect x="234.3" y="368.28000000000003" width="108" height="11.9" fill="#2f4a63" />
<rect x="234.3" y="369.03000000000003" width="108" height="10.4" fill="#4a647a" />
<path d="M226.3,372.63l1.9,1.7l-1.9,1.7z" fill="#1a1a1a"/>
<path d="M235.7,371.93l2,-1.8l2.8,1l1,1.6l2.6,1l0.4,2.6l-2.6,2.2l-5.8,-2.2z" fill="#96761a" stroke="#3d2e06" stroke-width="0.5"/><path d="M237.8,373.33000000000004l2.2,0.9l-0.4,2.2" fill="none" stroke="#5a4408" stroke-width="0.5"/>
<circle cx="240.6" cy="373.13000000000005" r="2.1" fill="#2a6690" stroke="#193650" stroke-width="0.4"/><circle cx="240.6" cy="373.13000000000005" r="0.8" fill="#7aa6c0"/>
<text x="248" y="376.63" font-size="6.5" fill="#151515" font-weight="normal" text-anchor="start"  xml:space="preserve" textLength="96.05" lengthAdjust="spacingAndGlyphs">USBKS12-10-M4&lt;3&gt; (Default) &lt;Di</text>
<rect x="234.3" y="380.17" width="108" height="11.9" fill="#2f4a63" />
<rect x="234.3" y="380.92" width="108" height="10.4" fill="#4a647a" />
<path d="M226.3,384.52l1.9,1.7l-1.9,1.7z" fill="#1a1a1a"/>
<path d="M235.7,383.82l2,-1.8l2.8,1l1,1.6l2.6,1l0.4,2.6l-2.6,2.2l-5.8,-2.2z" fill="#96761a" stroke="#3d2e06" stroke-width="0.5"/><path d="M237.8,385.22l2.2,0.9l-0.4,2.2" fill="none" stroke="#5a4408" stroke-width="0.5"/>
<circle cx="240.6" cy="385.02000000000004" r="2.1" fill="#2a6690" stroke="#193650" stroke-width="0.4"/><circle cx="240.6" cy="385.02000000000004" r="0.8" fill="#7aa6c0"/>
<text x="248" y="388.52" font-size="6.5" fill="#151515" font-weight="normal" text-anchor="start"  xml:space="preserve" textLength="96.05" lengthAdjust="spacingAndGlyphs">USBKS12-10-M4&lt;2&gt; (Default) &lt;Di</text>
<rect x="234.3" y="392.06" width="108" height="11.9" fill="#2f4a63" />
<rect x="234.3" y="392.81" width="108" height="10.4" fill="#4a647a" />
<path d="M226.3,396.40999999999997l1.9,1.7l-1.9,1.7z" fill="#1a1a1a"/>
<path d="M235.7,395.71l2,-1.8l2.8,1l1,1.6l2.6,1l0.4,2.6l-2.6,2.2l-5.8,-2.2z" fill="#96761a" stroke="#3d2e06" stroke-width="0.5"/><path d="M237.8,397.11l2.2,0.9l-0.4,2.2" fill="none" stroke="#5a4408" stroke-width="0.5"/>
<text x="248" y="400.40999999999997" font-size="6.5" fill="#151515" font-weight="normal" text-anchor="start"  xml:space="preserve" textLength="97.27" lengthAdjust="spacingAndGlyphs">WSSB10-4-2.5&lt;1&gt; (Default) &lt;&lt;Def</text>
<rect x="234.3" y="403.95" width="108" height="11.9" fill="#2f4a63" />
<rect x="234.3" y="404.7" width="108" height="10.4" fill="#4a647a" />
<path d="M226.3,408.29999999999995l1.9,1.7l-1.9,1.7z" fill="#1a1a1a"/>
<path d="M235.7,407.59999999999997l2,-1.8l2.8,1l1,1.6l2.6,1l0.4,2.6l-2.6,2.2l-5.8,-2.2z" fill="#96761a" stroke="#3d2e06" stroke-width="0.5"/><path d="M237.8,409.0l2.2,0.9l-0.4,2.2" fill="none" stroke="#5a4408" stroke-width="0.5"/>
<text x="248" y="412.29999999999995" font-size="6.5" fill="#151515" font-weight="normal" text-anchor="start"  xml:space="preserve" textLength="97.27" lengthAdjust="spacingAndGlyphs">WSSB10-4-2.5&lt;2&gt; (Default) &lt;&lt;Def</text>
<rect x="234.3" y="415.84000000000003" width="108" height="11.9" fill="#2f4a63" />
<rect x="234.3" y="416.59000000000003" width="108" height="10.4" fill="#4a647a" />
<path d="M226.3,420.19l1.9,1.7l-1.9,1.7z" fill="#1a1a1a"/>
<path d="M235.7,419.49l2,-1.8l2.8,1l1,1.6l2.6,1l0.4,2.6l-2.6,2.2l-5.8,-2.2z" fill="#96761a" stroke="#3d2e06" stroke-width="0.5"/><path d="M237.8,420.89000000000004l2.2,0.9l-0.4,2.2" fill="none" stroke="#5a4408" stroke-width="0.5"/>
<text x="248" y="424.19" font-size="6.5" fill="#151515" font-weight="normal" text-anchor="start"  xml:space="preserve" textLength="97.62" lengthAdjust="spacingAndGlyphs">RQDM30-50&lt;1&gt; (Default) &lt;&lt;Defau</text>
<rect x="234.3" y="427.73" width="108" height="11.9" fill="#2f4a63" />
<rect x="234.3" y="428.48" width="108" height="10.4" fill="#4a647a" />
<path d="M226.3,432.08l1.9,1.7l-1.9,1.7z" fill="#1a1a1a"/>
<path d="M235.7,431.38l2,-1.8l2.8,1l1,1.6l2.6,1l0.4,2.6l-2.6,2.2l-5.8,-2.2z" fill="#96761a" stroke="#3d2e06" stroke-width="0.5"/><path d="M237.8,432.78000000000003l2.2,0.9l-0.4,2.2" fill="none" stroke="#5a4408" stroke-width="0.5"/>
<text x="248" y="436.08" font-size="6.5" fill="#151515" font-weight="normal" text-anchor="start"  xml:space="preserve" textLength="97.62" lengthAdjust="spacingAndGlyphs">RQDM30-50&lt;2&gt; (Default) &lt;&lt;Defau</text>
<rect x="234.3" y="439.62" width="108" height="11.9" fill="#2f4a63" />
<rect x="234.3" y="440.37" width="108" height="10.4" fill="#4a647a" />
<path d="M226.3,443.96999999999997l1.9,1.7l-1.9,1.7z" fill="#1a1a1a"/>
<path d="M235.7,443.27l2,-1.8l2.8,1l1,1.6l2.6,1l0.4,2.6l-2.6,2.2l-5.8,-2.2z" fill="#96761a" stroke="#3d2e06" stroke-width="0.5"/><path d="M237.8,444.67l2.2,0.9l-0.4,2.2" fill="none" stroke="#5a4408" stroke-width="0.5"/>
<text x="248" y="447.96999999999997" font-size="6.5" fill="#151515" font-weight="normal" text-anchor="start"  xml:space="preserve" textLength="95.36" lengthAdjust="spacingAndGlyphs">MSS-10&lt;1&gt; (Default) &lt;&lt;Default&gt;_</text>
<rect x="234.3" y="451.51000000000005" width="108" height="11.9" fill="#2f4a63" />
<rect x="234.3" y="452.26000000000005" width="108" height="10.4" fill="#4a647a" />
<path d="M226.3,455.86l1.9,1.7l-1.9,1.7z" fill="#1a1a1a"/>
<path d="M235.7,455.16l2,-1.8l2.8,1l1,1.6l2.6,1l0.4,2.6l-2.6,2.2l-5.8,-2.2z" fill="#96761a" stroke="#3d2e06" stroke-width="0.5"/><path d="M237.8,456.56000000000006l2.2,0.9l-0.4,2.2" fill="none" stroke="#5a4408" stroke-width="0.5"/>
<text x="248" y="459.86" font-size="6.5" fill="#151515" font-weight="normal" text-anchor="start"  xml:space="preserve" textLength="95.36" lengthAdjust="spacingAndGlyphs">MSS-10&lt;4&gt; (Default) &lt;&lt;Default&gt;_</text>
<rect x="234.3" y="463.40000000000003" width="108" height="11.9" fill="#2f4a63" />
<rect x="234.3" y="464.15000000000003" width="108" height="10.4" fill="#4a647a" />
<path d="M226.3,467.75l1.9,1.7l-1.9,1.7z" fill="#1a1a1a"/>
<path d="M235.7,467.05l2,-1.8l2.8,1l1,1.6l2.6,1l0.4,2.6l-2.6,2.2l-5.8,-2.2z" fill="#96761a" stroke="#3d2e06" stroke-width="0.5"/><path d="M237.8,468.45000000000005l2.2,0.9l-0.4,2.2" fill="none" stroke="#5a4408" stroke-width="0.5"/>
<text x="248" y="471.75" font-size="6.5" fill="#151515" font-weight="normal" text-anchor="start"  xml:space="preserve" textLength="95.36" lengthAdjust="spacingAndGlyphs">MSS-10&lt;3&gt; (Default) &lt;&lt;Default&gt;_</text>
<rect x="234.3" y="475.29" width="108" height="11.9" fill="#2f4a63" />
<rect x="234.3" y="476.04" width="108" height="10.4" fill="#4a647a" />
<path d="M226.3,479.64l1.9,1.7l-1.9,1.7z" fill="#1a1a1a"/>
<path d="M235.7,478.94l2,-1.8l2.8,1l1,1.6l2.6,1l0.4,2.6l-2.6,2.2l-5.8,-2.2z" fill="#96761a" stroke="#3d2e06" stroke-width="0.5"/><path d="M237.8,480.34000000000003l2.2,0.9l-0.4,2.2" fill="none" stroke="#5a4408" stroke-width="0.5"/>
<text x="248" y="483.64" font-size="6.5" fill="#151515" font-weight="normal" text-anchor="start"  xml:space="preserve" textLength="95.36" lengthAdjust="spacingAndGlyphs">MSS-10&lt;5&gt; (Default) &lt;&lt;Default&gt;_</text>
<rect x="234.3" y="487.18" width="108" height="11.9" fill="#2f4a63" />
<rect x="234.3" y="487.93" width="108" height="10.4" fill="#4a647a" />
<path d="M226.3,491.53l1.9,1.7l-1.9,1.7z" fill="#1a1a1a"/>
<path d="M235.7,490.83l2,-1.8l2.8,1l1,1.6l2.6,1l0.4,2.6l-2.6,2.2l-5.8,-2.2z" fill="#96761a" stroke="#3d2e06" stroke-width="0.5"/><path d="M237.8,492.23l2.2,0.9l-0.4,2.2" fill="none" stroke="#5a4408" stroke-width="0.5"/>
<text x="248" y="495.53" font-size="6.5" fill="#151515" font-weight="normal" text-anchor="start"  xml:space="preserve" textLength="95.36" lengthAdjust="spacingAndGlyphs">MSS-10&lt;2&gt; (Default) &lt;&lt;Default&gt;_</text>
</g>
<rect x="346.6" y="200" width="1.2" height="267" fill="#555555" />
<rect x="231" y="495.8" width="40.4" height="0.9" fill="#505050" />
<rect x="351.4" y="309" width="4.4" height="21" fill="#666" stroke="#5a5a5a" stroke-width="0.5"/><circle cx="353.4" cy="319.5" r="0.8" fill="none" stroke="#4a4a4a" stroke-width="0.4"/>
<rect x="221.4" y="504.2" width="36" height="7.4" fill="#626262" stroke="#585858" stroke-width="0.6"/>
<path d="M226.5,506l-2,2l2,2z" fill="#5a5a5a"/>
<path d="M235.5,506l-2,2l2,2z" fill="#5a5a5a"/>
<path d="M242.5,506l2,2l-2,2z" fill="#5a5a5a"/>
<path d="M251.5,506l2,2l-2,2z" fill="#5a5a5a"/>
<rect x="258" y="503.6" width="25.6" height="8.4" fill="#707070" stroke="#5a5a5a" stroke-width="0.5"/>
<text x="264.66" y="510.3" font-size="6.2" fill="#151515" textLength="12.2" lengthAdjust="spacingAndGlyphs">モデル</text>
<rect x="284.2" y="504.2" width="55.6" height="7.6" fill="#626262" stroke="#565656" stroke-width="0.6"/>
<text x="308.8" y="510.2" font-size="6.6" fill="#151515" font-weight="normal" text-anchor="middle" >Motion Study 1</text>
<text x="221.6" y="519.1" font-size="5.9" fill="#1c1c1c" font-weight="normal" text-anchor="start" textLength="69" lengthAdjust="spacingAndGlyphs">SOLIDWORKS 2022 SP5.0</text>
<text x="826.3" y="519.8" font-size="6" fill="#1c1c1c" textLength="24" lengthAdjust="spacingAndGlyphs">完全定義</text>
<text x="861.5" y="519.8" font-size="6" fill="#1c1c1c" textLength="23.5" lengthAdjust="spacingAndGlyphs">編集中：</text>
<text x="885.5" y="519.8" font-size="6" fill="#1c1c1c" font-weight="normal" text-anchor="start"  xml:space="preserve"> Assembly</text>
<path d="M931.5,520.5l2.6,-4.4l2.8,1.6l1.6,-2.6" fill="none" stroke="#1c1c1c" stroke-width="0.9"/><path d="M932,519l3.6,1.2" stroke="#a07c12" stroke-width="1.4"/>
<text x="981" y="519.8" font-size="6" fill="#1c1c1c" textLength="26.8" lengthAdjust="spacingAndGlyphs">ユーザー定義</text>
<path d="M1021.6,518.6l1.3,-1.4l1.3,1.4z" fill="#1c1c1c"/>
<path d="M1039.4,516.4h5.2l2.2,2l-2.2,2.2h-5.2z" fill="none" stroke="#1c1c1c" stroke-width="0.8"/><circle cx="1042.4" cy="518.5" r="1.1" fill="none" stroke="#1c1c1c" stroke-width="0.6"/>
<rect x="1045.8" y="164.6" width="12.6" height="12.2" fill="#666" stroke="#4c4c4c" stroke-width="0.6"/>
<rect x="1045.8" y="177.6" width="12.6" height="12.2" fill="#666" stroke="#4c4c4c" stroke-width="0.6"/>
<rect x="1045.8" y="190.6" width="12.6" height="12.2" fill="#666" stroke="#4c4c4c" stroke-width="0.6"/>
<rect x="1045.8" y="203.6" width="12.6" height="12.2" fill="#666" stroke="#4c4c4c" stroke-width="0.6"/>
<rect x="1045.8" y="216.6" width="12.6" height="12.2" fill="#666" stroke="#4c4c4c" stroke-width="0.6"/>
<rect x="1045.8" y="229.6" width="12.6" height="12.2" fill="#666" stroke="#4c4c4c" stroke-width="0.6"/>
<path d="M1047.6,170.9l4.6,-4.2l4.6,4.2" fill="none" stroke="#16304a" stroke-width="1.4"/><path d="M1049.2,171.1v4h6v-4" fill="#858585" stroke="#2a2a2a" stroke-width="0.6"/>
<path d="M1048.6,181.6l3,-1.6l4.4,1v5.4l-3,1.6l-4.4,-1z" fill="#8a8a8a" stroke="#2a2a2a" stroke-width="0.6"/><path d="M1048.6,181.6l4.4,1l3,-1.6M1053,182.6v5.4" fill="none" stroke="#2a2a2a" stroke-width="0.5"/>
<path d="M1047.8,200.6v-7h3l1,1h3.6v1.6h1.6l-2,4.4z" fill="#7a7a7a" stroke="#2a2a2a" stroke-width="0.6"/>
<rect x="1048" y="206.2" width="8.4" height="7.4" fill="#777" stroke="#2a2a2a" stroke-width="0.6"/><path d="M1049.6,207.6l5,4.6M1054.6,207.6l-5,4.6" stroke="#9a7a14" stroke-width="1.6"/>
<circle cx="1052.2" cy="222.79999999999998" r="4.2" fill="#8a8a8a"/><path d="M1052.2,222.79999999999998l-3.7,-2a4.2,4.2 0 0 1 7.4,0z" fill="#2a5a9a"/><path d="M1052.2,222.79999999999998l3.7,-2a4.2,4.2 0 0 1 -3.7,6.2z" fill="#8a2a24"/><path d="M1052.2,222.79999999999998v4.2a4.2,4.2 0 0 1 -3.7,-6.2z" fill="#2d7a34"/>
<rect x="1047.8" y="231.79999999999998" width="8.8" height="8.4" fill="#7c7c7c" stroke="#1e3a58" stroke-width="0.7"/><rect x="1047.8" y="231.79999999999998" width="8.8" height="2" fill="#1e3a58"/><path d="M1047.8,236.0h8.8M1047.8,238.2h8.8M1050.6,233.79999999999998v6.4" stroke="#1e3a58" stroke-width="0.5"/>
<path d="M373.4,471.6v-9" stroke="#17541f" stroke-width="1.9"/><path d="M373.4,458.40000000000003l-2.2,4.6h4.4z" fill="#17541f"/>
<path d="M373.4,471.6l7.6,4" stroke="#7a1818" stroke-width="1.9"/><path d="M384.2,477.40000000000003l-4.8,-0.4l2,-3.6z" fill="#7a1818"/>
<path d="M373.4,471.6l-7.6,4" stroke="#18187a" stroke-width="1.9"/><path d="M362.59999999999997,477.40000000000003l4.8,-0.4l-2,-3.6z" fill="#18187a"/>
<text x="373.0" y="457.4" font-size="5.6" fill="#3d7446" font-weight="normal" text-anchor="middle" >Y</text>
<text x="386.0" y="481.4" font-size="5.6" fill="#8a3434" font-weight="normal" text-anchor="middle" >X</text>
<text x="360.59999999999997" y="481.6" font-size="5.6" fill="#34348a" font-weight="normal" text-anchor="middle" >Z</text>
<rect x="358.4" y="495.6" width="1.7" height="3.6" fill="#111" />
<text x="361.6" y="500.5" font-size="7.9" font-weight="bold" fill="#0e0e0e" textLength="31.6" lengthAdjust="spacingAndGlyphs">等角投影</text>
</g>
<g filter="url(#bl2)">
<polygon points="403.75,337.50 512.00,272.00 699.50,380.50 593.75,444.30 587.00,447.00" fill="#274f6a" stroke="#06101c" stroke-width="0.7" stroke-linejoin="round" />
<polygon points="403.75,337.50 587.00,447.00 587.00,458.00 403.75,351.50" fill="#11202f" stroke="#06101c" stroke-width="0.7" stroke-linejoin="round" />
<polygon points="587.00,447.00 593.75,444.30 593.75,458.20 587.00,458.00" fill="#1a3651" stroke="#06101c" stroke-width="0.7" stroke-linejoin="round" />
<polygon points="593.75,444.30 699.50,380.50 699.80,396.50 593.75,458.20" fill="#1a3651" stroke="#06101c" stroke-width="0.7" stroke-linejoin="round" />
<polygon points="650.00,361.00 666.50,354.00 687.50,366.00 662.00,380.50" fill="#274f6a" stroke="#06101c" stroke-width="0.7" stroke-linejoin="round" />
<polygon points="644.50,350.00 650.50,352.50 662.00,380.50 687.50,366.00 687.50,383.00 645.00,408.00" fill="#1a3651" stroke="#06101c" stroke-width="0.7" stroke-linejoin="round" />
<path d="M653.6,358.8 v9.5 a7.6,4.8 0 0 0 15.2,0 v-9.5z" fill="#1a3651" stroke="#06101c" stroke-width="0.6"/>
<ellipse cx="661.2" cy="358.8" rx="7.6" ry="4.9" fill="#274f6a" stroke="#06101c" stroke-width="0.6"/><ellipse cx="661.2" cy="358.8" rx="5.6" ry="3.5" fill="none" stroke="#2b5774" stroke-width="0.7"/><ellipse cx="661.2" cy="359.0" rx="3.6" ry="2.2" fill="#0f2136" stroke="#06101c" stroke-width="0.4"/><ellipse cx="661.2" cy="359.40000000000003" rx="1.8" ry="1" fill="#2a5a7c"/>
<polygon points="644.20,302.00 649.80,305.00 649.80,342.00 644.20,346.00" fill="#1a3651" stroke="#06101c" stroke-width="0.7" stroke-linejoin="round" />
<ellipse cx="651.4" cy="324.5" rx="3.2" ry="8.6" fill="#1a3651" stroke="#06101c" stroke-width="0.6"/>
<polygon points="477.50,181.25 487.50,175.00 636.25,260.00 626.25,266.25" fill="#274f6a" stroke="#06101c" stroke-width="0.7" stroke-linejoin="round" />
<polygon points="626.25,266.25 636.25,260.00 644.50,273.75 634.50,281.25" fill="#274f6a" stroke="#06101c" stroke-width="0.7" stroke-linejoin="round" />
<polygon points="634.50,281.25 644.50,273.75 644.50,415.00 634.00,421.25" fill="#1a3651" stroke="#06101c" stroke-width="0.7" stroke-linejoin="round" />
<polygon points="443.00,314.50 443.00,201.25 477.50,181.25 626.25,266.25 634.50,281.25 634.00,421.25" fill="#11202f" stroke="#06101c" stroke-width="0.7" stroke-linejoin="round" />
<g transform="rotate(-12 462.5 254.5)"><ellipse cx="462.5" cy="254.5" rx="4.3" ry="5.8" fill="#2b5774" stroke="#06101c" stroke-width="0.5"/><ellipse cx="463.88" cy="254.7" rx="3.10" ry="5.22" fill="#0e1d30"/></g>
<g transform="rotate(-12 614.6 342)"><ellipse cx="614.6" cy="342" rx="3.6" ry="4.6" fill="#2b5774" stroke="#06101c" stroke-width="0.5"/><ellipse cx="615.75" cy="342.2" rx="2.59" ry="4.14" fill="#0e1d30"/></g>
<defs><linearGradient id="rg" x1="0" y1="0" x2="1" y2="1"><stop offset="0" stop-color="#224866"/><stop offset="0.45" stop-color="#2a5673"/><stop offset="1" stop-color="#17324c"/></linearGradient></defs>
<path d="M490.5,217.1 L508.5,206.5 A14,14 0 0 1 522.7,230.7 L504.7,241.2 Z" fill="url(#rg)" stroke="#06101c" stroke-width="0.7"/>
<ellipse cx="500.6" cy="219.7" rx="8.4" ry="4.4" fill="#2b5774" stroke="#06101c" stroke-width="0.5" transform="rotate(-30 500.6 219.7)"/>
<ellipse cx="538.2" cy="243.2" rx="4.6" ry="5" fill="#274f6a" stroke="#06101c" stroke-width="0.6"/>
<polygon points="479.40,223.90 487.20,218.40 553.00,254.60 545.50,260.60" fill="#274f6a" stroke="#06101c" stroke-width="0.7" stroke-linejoin="round" />
<path d="M545.5,260.6 L553,254.6 Q555.8,256 555.8,259.5 L555.8,306.5 L547.2,313 L547.2,265 Q547.2,262 545.5,260.6Z" fill="#274f6a" stroke="#06101c" stroke-width="0.7"/>
<path d="M479.6,223.8 L545,260.2 Q547.2,261.6 547.2,265 L547.2,313 L544,315.3 L480,280.5 Q477,278.5 477,275 L477,228 Q477,223.6 479.6,223.8 Z" fill="#11202f" stroke="#06101c" stroke-width="0.7"/>
<g transform="rotate(-12 485.6 236.5)"><ellipse cx="485.6" cy="236.5" rx="3.2" ry="4.4" fill="#2b5774" stroke="#06101c" stroke-width="0.5"/><ellipse cx="486.62" cy="236.7" rx="2.30" ry="3.96" fill="#0e1d30"/></g>
<g transform="rotate(-12 485.6 272.4)"><ellipse cx="485.6" cy="272.4" rx="3.2" ry="4.4" fill="#2b5774" stroke="#06101c" stroke-width="0.5"/><ellipse cx="486.62" cy="272.59999999999997" rx="2.30" ry="3.96" fill="#0e1d30"/></g>
<ellipse cx="520" cy="273.2" rx="3.4" ry="4.6" fill="#0f1f33" stroke="#1d3b59" stroke-width="0.6" transform="rotate(-12 520 273.2)"/>
<path d="M526.10,276.05 l6.30,-3.19 a7.14,8.40 0 0 1 7.14,15.12 l-6.30,3.19z" fill="#274f6a" stroke="#06101c" stroke-width="0.6"/>
<g transform="rotate(-18 530.30 284.20)"><ellipse cx="529.04" cy="284.87" rx="6.72" ry="8.15" fill="#1e3f5e" stroke="#06101c" stroke-width="0.6"/><ellipse cx="529.04" cy="284.87" rx="5.21" ry="6.55" fill="none" stroke="#2b5774" stroke-width="0.7"/><ellipse cx="528.62" cy="285.21" rx="3.02" ry="3.78" fill="#0f2136" stroke="#06101c" stroke-width="0.4"/><ellipse cx="528.62" cy="285.38" rx="1.43" ry="1.85" fill="#2a5a7c"/></g>
<path d="M489.5,292 l8,-4.5 a6,6.8 0 0 1 6,11 l-8,4.5z" fill="#1a3651" stroke="#06101c" stroke-width="0.6"/><ellipse cx="494.4" cy="298" rx="5.6" ry="6.6" fill="#274f6a" stroke="#06101c" stroke-width="0.6" transform="rotate(-20 494.4 298)"/>
<polygon points="584.89,255.13 588.16,251.34 626.49,269.56 627.69,291.56 623.91,294.66 584.89,275.24" fill="#1a3651" stroke="#06101c" stroke-width="0.6" stroke-linejoin="round" />
<polygon points="586.95,252.72 589.88,250.66 626.83,269.22 624.42,271.45" fill="#274f6a" stroke="#06101c" stroke-width="0.6" stroke-linejoin="round" />
<polygon points="624.42,271.45 626.83,269.22 627.69,291.56 625.63,293.28" fill="#1f4060" stroke="#06101c" stroke-width="0.6" stroke-linejoin="round" />
<polygon points="559.97,257.19 567.19,253.41 574.06,256.33 575.78,264.41 570.63,270.08 562.38,266.64" fill="#1a3651" stroke="#06101c" stroke-width="0.6" stroke-linejoin="round" />
<polygon points="559.97,257.19 567.19,253.41 574.06,256.33 567.88,260.28" fill="#274f6a" stroke="#06101c" stroke-width="0.6" stroke-linejoin="round" />
<polygon points="567.88,260.28 574.06,256.33 575.78,264.41 570.63,270.08" fill="#1f4060" stroke="#06101c" stroke-width="0.6" stroke-linejoin="round" />
<polygon points="555.84,260.97 559.97,257.88 562.38,266.13 558.59,268.36" fill="#274f6a" stroke="#06101c" stroke-width="0.6" stroke-linejoin="round" />
<polygon points="557.22,276.95 567.19,269.56 572.00,274.38 577.50,279.53 581.80,274.38 590.39,278.16 595.03,281.25 601.56,291.22 625.63,291.22 627.69,299.30 602.42,304.97 586.95,300.50 585.24,296.72 566.33,290.19 560.31,284.35" fill="#274f6a" stroke="#06101c" stroke-width="0.6" stroke-linejoin="round" />
<polygon points="565.13,291.22 585.24,297.06 586.44,306.17 566.33,298.10" fill="#1a3651" stroke="#06101c" stroke-width="0.6" stroke-linejoin="round" />
<polygon points="570.63,294.66 584.38,298.78 584.89,302.22 570.97,298.10" fill="#10213a" stroke="#06101c" stroke-width="0.6" stroke-linejoin="round" />
<polygon points="586.95,300.50 602.42,304.97 602.94,316.49 586.95,310.81" fill="#1a3651" stroke="#06101c" stroke-width="0.6" stroke-linejoin="round" />
<ellipse cx="572.3" cy="286.5" rx="3.6" ry="2.6" fill="#1a3651" stroke="#06101c" stroke-width="0.4"/><ellipse cx="572.3" cy="285.5" rx="3.6" ry="2.4" fill="#2b5774" stroke="#06101c" stroke-width="0.4"/>
<ellipse cx="583.0" cy="281.6" rx="3.4" ry="2.6" fill="#1a3651" stroke="#06101c" stroke-width="0.4"/><ellipse cx="583.0" cy="280.6" rx="3.4" ry="2.4" fill="#2b5774" stroke="#06101c" stroke-width="0.4"/>
<ellipse cx="591.3" cy="291.2" rx="3.4" ry="2.6" fill="#1a3651" stroke="#06101c" stroke-width="0.4"/><ellipse cx="591.3" cy="290.2" rx="3.4" ry="2.4" fill="#2b5774" stroke="#06101c" stroke-width="0.4"/>
<ellipse cx="605.9" cy="292.6" rx="3.4" ry="2.6" fill="#1a3651" stroke="#06101c" stroke-width="0.4"/><ellipse cx="605.9" cy="291.6" rx="3.4" ry="2.4" fill="#2b5774" stroke="#06101c" stroke-width="0.4"/>
<path d="M591.0639394981093,286.0326572705397 a5.5,4 0 0 1 11,1" fill="none" stroke="#06101c" stroke-width="1.2"/>
<path d="M584.57,257.83 l6.15,-3.12 a6.97,8.20 0 0 1 6.97,14.76 l-6.15,3.12z" fill="#274f6a" stroke="#06101c" stroke-width="0.6"/>
<g transform="rotate(-18 588.67 265.78)"><ellipse cx="587.44" cy="266.44" rx="6.56" ry="7.95" fill="#1e3f5e" stroke="#06101c" stroke-width="0.6"/><ellipse cx="587.44" cy="266.44" rx="5.08" ry="6.40" fill="none" stroke="#2b5774" stroke-width="0.7"/><ellipse cx="587.03" cy="266.77" rx="2.95" ry="3.69" fill="#0f2136" stroke="#06101c" stroke-width="0.4"/><ellipse cx="587.03" cy="266.93" rx="1.39" ry="1.80" fill="#2a5a7c"/></g>
<path d="M607.78,271.23 l6.15,-3.12 a6.97,8.20 0 0 1 6.97,14.76 l-6.15,3.12z" fill="#274f6a" stroke="#06101c" stroke-width="0.6"/>
<g transform="rotate(-18 611.88 279.19)"><ellipse cx="610.65" cy="279.84" rx="6.56" ry="7.95" fill="#1e3f5e" stroke="#06101c" stroke-width="0.6"/><ellipse cx="610.65" cy="279.84" rx="5.08" ry="6.40" fill="none" stroke="#2b5774" stroke-width="0.7"/><ellipse cx="610.24" cy="280.17" rx="2.95" ry="3.69" fill="#0f2136" stroke="#06101c" stroke-width="0.4"/><ellipse cx="610.24" cy="280.34" rx="1.39" ry="1.80" fill="#2a5a7c"/></g>
<path d="M602.9,309.1 L628.2,305.7 Q635.9,312.2 642.8,325.9 Q646.6,335.6 639.7,343.5 L630.8,343.1 L602.9,322.8 Z" fill="#13283d" stroke="#06101c" stroke-width="0.6"/>
<path d="M628.2,305.7 L632.2,302.2 Q644.5,307.4 649.0,322.2 Q652.4,335.6 645.9,341.8 L639.7,343.5 Q646.6,335.6 642.8,325.9 Q635.9,312.2 628.2,305.7 Z" fill="#274f6a" stroke="#06101c" stroke-width="0.6"/>
<polygon points="602.94,309.10 609.30,303.94 632.16,302.22 628.21,305.66" fill="#274f6a" stroke="#06101c" stroke-width="0.6" stroke-linejoin="round" />
<path d="M530.50,353.25 l6.15,-3.12 a6.97,8.20 0 0 1 6.97,14.76 l-6.15,3.12z" fill="#274f6a" stroke="#06101c" stroke-width="0.6"/>
<g transform="rotate(-18 534.60 361.20)"><ellipse cx="533.37" cy="361.86" rx="6.56" ry="7.95" fill="#1e3f5e" stroke="#06101c" stroke-width="0.6"/><ellipse cx="533.37" cy="361.86" rx="5.08" ry="6.40" fill="none" stroke="#2b5774" stroke-width="0.7"/><ellipse cx="532.96" cy="362.18" rx="2.95" ry="3.69" fill="#0f2136" stroke="#06101c" stroke-width="0.4"/><ellipse cx="532.96" cy="362.35" rx="1.39" ry="1.80" fill="#2a5a7c"/></g>
<polygon points="464.00,328.50 485.00,315.60 501.25,325.00 475.60,337.25" fill="#274f6a" stroke="#06101c" stroke-width="0.7" stroke-linejoin="round" />
<polygon points="459.40,331.25 464.00,328.50 475.60,337.25 474.20,340.40" fill="#2b5774" stroke="#06101c" stroke-width="0.7" stroke-linejoin="round" />
<polygon points="475.60,337.25 501.25,325.00 501.25,327.00 474.20,340.40" fill="#2b5774" stroke="#06101c" stroke-width="0.7" stroke-linejoin="round" />
<polygon points="474.20,340.40 501.25,327.00 501.25,348.00 494.00,352.20" fill="#1a3651" stroke="#06101c" stroke-width="0.7" stroke-linejoin="round" />
<polygon points="443.75,339.75 459.20,331.25 563.10,391.25 548.10,399.75" fill="#274f6a" stroke="#06101c" stroke-width="0.7" stroke-linejoin="round" />
<polygon points="443.75,339.75 548.10,399.75 548.10,422.50 443.75,361.40" fill="#11202f" stroke="#06101c" stroke-width="0.7" stroke-linejoin="round" />
<g transform="rotate(-12 450.6 355.7)"><ellipse cx="450.6" cy="355.7" rx="3" ry="4.2" fill="#2b5774" stroke="#06101c" stroke-width="0.5"/><ellipse cx="451.56" cy="355.9" rx="2.16" ry="3.78" fill="#0e1d30"/></g>
<g transform="rotate(-12 539.8 407.3)"><ellipse cx="539.8" cy="407.3" rx="3" ry="4.2" fill="#2b5774" stroke="#06101c" stroke-width="0.5"/><ellipse cx="540.76" cy="407.5" rx="2.16" ry="3.78" fill="#0e1d30"/></g>
<polygon points="548.10,399.75 563.10,391.25 563.10,414.40 548.10,422.50" fill="#1a3651" stroke="#06101c" stroke-width="0.7" stroke-linejoin="round" />
<polygon points="548.75,383.10 552.50,381.25 564.40,389.40 563.10,391.25" fill="#2b5774" stroke="#06101c" stroke-width="0.7" stroke-linejoin="round" />
<polygon points="552.50,381.25 575.60,367.75 591.00,376.50 564.40,389.40" fill="#274f6a" stroke="#06101c" stroke-width="0.7" stroke-linejoin="round" />
<polygon points="564.40,389.40 591.00,376.50 591.00,398.75 563.75,413.75 563.10,391.25" fill="#1a3651" stroke="#06101c" stroke-width="0.7" stroke-linejoin="round" />
</g>
<g filter="url(#bl2)">
<rect x="723" y="186" width="314.3" height="261.8" fill="#3e4044" />
<rect x="723.6" y="201.4" width="313.3" height="246" fill="#f5f5f5" />
<rect x="723.6" y="186.8" width="313.3" height="14.6" fill="#27292d" />
<path d="M726.6,197.6l5.2,-6.2q1.2,-0.8 2.2,0.2l2,3.2q0.4,1.6 -1.2,2l-7.4,1.6z" fill="#f2f2f2"/><path d="M729.4,196.6l4.2,-1.2" stroke="#27292d" stroke-width="0.6"/>
<text x="741.4" y="196.6" font-size="6.4" fill="#f0f0f0" textLength="64.8" lengthAdjust="spacingAndGlyphs">標準品/図面品一括見積</text>
<text x="796.64" y="230.6" font-size="11.6" font-weight="bold" fill="#111" textLength="166" lengthAdjust="spacingAndGlyphs">SOLIDWORKSでモデルを選択後に</text>
<rect x="808" y="234.9" width="50.6" height="12.8" rx="6.4" fill="#ffc800"/>
<text x="825.7" y="244.1" font-size="7.5" font-weight="bold" fill="#1a1a1a" textLength="15" lengthAdjust="spacingAndGlyphs">確定</text>
<text x="859.4" y="245.6" font-size="11.6" font-weight="bold" fill="#111" textLength="95" lengthAdjust="spacingAndGlyphs">をクリックしてください</text>
<rect x="749" y="254" width="101.4" height="143.5" fill="#fcfcfc" />
<clipPath id="dtree"><rect x="749" y="254" width="100.4" height="143.2"/></clipPath><g clip-path="url(#dtree)">
<path d="M761.4,255.99999999999997l5,-1.3v7.6l-5,1.3z" fill="#fff" stroke="#555" stroke-width="0.7"/><path d="M759.8,258.59999999999997h2.6v2.4h-2.6" fill="none" stroke="#555" stroke-width="0.7"/>
<text x="770" y="261.79999999999995" font-size="6.7" fill="#262626" font-weight="normal" text-anchor="start"  xml:space="preserve" textLength="10.97" lengthAdjust="spacingAndGlyphs">Top</text>
<path d="M761.4,267.45l5,-1.3v7.6l-5,1.3z" fill="#fff" stroke="#555" stroke-width="0.7"/><path d="M759.8,270.04999999999995h2.6v2.4h-2.6" fill="none" stroke="#555" stroke-width="0.7"/>
<text x="770" y="273.24999999999994" font-size="6.7" fill="#262626" font-weight="normal" text-anchor="start"  xml:space="preserve" textLength="14.86" lengthAdjust="spacingAndGlyphs">Right</text>
<path d="M760,277.9v7.8h7.6" fill="none" stroke="#111" stroke-width="1"/><path d="M760,276.9l-1.2,2h2.4z M768.6,285.69999999999993l-2,-1.2v2.4z" fill="#111"/>
<text x="770" y="284.69999999999993" font-size="6.7" fill="#262626" font-weight="normal" text-anchor="start"  xml:space="preserve" textLength="16.98" lengthAdjust="spacingAndGlyphs">Origin</text>
<path d="M750,292.05l1.9,1.7l-1.9,1.7z" fill="#333"/>
<g transform="translate(763,293.75) scale(1.18)"><path d="M-4.1,-2.4l2,-1.8l2.6,1l1,1.6l2.4,1l0.4,2.4l-2.4,2l-5.6,-2z" fill="#f0c01e" stroke="#8a6810" stroke-width="0.55"/><path d="M-2.1,-1.2l2.1,0.9l-0.4,2" fill="none" stroke="#a07c14" stroke-width="0.5"/></g>
<text x="770" y="296.15" font-size="6.7" fill="#262626" font-weight="normal" text-anchor="start"  xml:space="preserve">(</text>
<text x="771.92" y="296.15" font-size="6.7" fill="#262626" textLength="13.2" lengthAdjust="spacingAndGlyphs">固定</text>
<text x="785.12" y="296.15" font-size="6.7" fill="#262626" font-weight="normal" text-anchor="start"  xml:space="preserve" textLength="65.35" lengthAdjust="spacingAndGlyphs">) 0032_101_Servo_Motor</text>
<path d="M750,303.5l1.9,1.7l-1.9,1.7z" fill="#333"/>
<g transform="translate(763,305.2) scale(1.18)"><path d="M-4.1,-2.4l2,-1.8l2.6,1l1,1.6l2.4,1l0.4,2.4l-2.4,2l-5.6,-2z" fill="#f0c01e" stroke="#8a6810" stroke-width="0.55"/><path d="M-2.1,-1.2l2.1,0.9l-0.4,2" fill="none" stroke="#a07c14" stroke-width="0.5"/></g>
<circle cx="763.4" cy="303.7" r="2.4" fill="#3a96d8" stroke="#1f5a8a" stroke-width="0.4"/><circle cx="763.4" cy="303.7" r="0.9" fill="#d6ecfa"/>
<text x="770" y="307.59999999999997" font-size="6.7" fill="#262626" font-weight="normal" text-anchor="start"  xml:space="preserve" textLength="81.05" lengthAdjust="spacingAndGlyphs">0032_004_ATPA19L050-B-P13</text>
<path d="M750,314.95l1.9,1.7l-1.9,1.7z" fill="#333"/>
<g transform="translate(763,316.65) scale(1.18)"><path d="M-4.1,-2.4l2,-1.8l2.6,1l1,1.6l2.4,1l0.4,2.4l-2.4,2l-5.6,-2z" fill="#f0c01e" stroke="#8a6810" stroke-width="0.55"/><path d="M-2.1,-1.2l2.1,0.9l-0.4,2" fill="none" stroke="#a07c14" stroke-width="0.5"/></g>
<text x="770" y="319.04999999999995" font-size="6.7" fill="#262626" font-weight="normal" text-anchor="start"  xml:space="preserve" textLength="81.36" lengthAdjust="spacingAndGlyphs">(-) 0032_207_Shaft&lt;1&gt; (Default</text>
<path d="M750,326.4l1.9,1.7l-1.9,1.7z" fill="#333"/>
<g transform="translate(763,328.09999999999997) scale(1.18)"><path d="M-4.1,-2.4l2,-1.8l2.6,1l1,1.6l2.4,1l0.4,2.4l-2.4,2l-5.6,-2z" fill="#f0c01e" stroke="#8a6810" stroke-width="0.55"/><path d="M-2.1,-1.2l2.1,0.9l-0.4,2" fill="none" stroke="#a07c14" stroke-width="0.5"/></g>
<text x="770" y="330.49999999999994" font-size="6.7" fill="#262626" font-weight="normal" text-anchor="start"  xml:space="preserve" textLength="83.93" lengthAdjust="spacingAndGlyphs">0032_005_TUN165L050&lt;1&gt; (De</text>
<path d="M750,337.84999999999997l1.9,1.7l-1.9,1.7z" fill="#333"/>
<g transform="translate(763,339.54999999999995) scale(1.18)"><path d="M-4.1,-2.4l2,-1.8l2.6,1l1,1.6l2.4,1l0.4,2.4l-2.4,2l-5.6,-2z" fill="#f0c01e" stroke="#8a6810" stroke-width="0.55"/><path d="M-2.1,-1.2l2.1,0.9l-0.4,2" fill="none" stroke="#a07c14" stroke-width="0.5"/></g>
<circle cx="763.4" cy="338.04999999999995" r="2.4" fill="#3a96d8" stroke="#1f5a8a" stroke-width="0.4"/><circle cx="763.4" cy="338.04999999999995" r="0.9" fill="#d6ecfa"/>
<text x="770" y="341.94999999999993" font-size="6.7" fill="#262626" font-weight="normal" text-anchor="start"  xml:space="preserve" textLength="78.16" lengthAdjust="spacingAndGlyphs">0032_006_ATPA19L050-A-N3</text>
<path d="M750,349.3l1.9,1.7l-1.9,1.7z" fill="#333"/>
<g transform="translate(763,351.0) scale(1.18)"><path d="M-4.1,-2.4l2,-1.8l2.6,1l1,1.6l2.4,1l0.4,2.4l-2.4,2l-5.6,-2z" fill="#f0c01e" stroke="#8a6810" stroke-width="0.55"/><path d="M-2.1,-1.2l2.1,0.9l-0.4,2" fill="none" stroke="#a07c14" stroke-width="0.5"/></g>
<text x="770" y="353.4" font-size="6.7" fill="#262626" font-weight="normal" text-anchor="start"  xml:space="preserve" textLength="75.92" lengthAdjust="spacingAndGlyphs">0032_205_Shaft&lt;1&gt; (Default)</text>
<path d="M750,360.75l1.9,1.7l-1.9,1.7z" fill="#333"/>
<g transform="translate(763,362.45) scale(1.18)"><path d="M-4.1,-2.4l2,-1.8l2.6,1l1,1.6l2.4,1l0.4,2.4l-2.4,2l-5.6,-2z" fill="#f0c01e" stroke="#8a6810" stroke-width="0.55"/><path d="M-2.1,-1.2l2.1,0.9l-0.4,2" fill="none" stroke="#a07c14" stroke-width="0.5"/></g>
<text x="770" y="364.84999999999997" font-size="6.7" fill="#262626" font-weight="normal" text-anchor="start"  xml:space="preserve" textLength="81.35" lengthAdjust="spacingAndGlyphs">(-) 0032_310_MSSF4-6&lt;1&gt; (De</text>
<path d="M750,372.2l1.9,1.7l-1.9,1.7z" fill="#333"/>
<g transform="translate(763,373.9) scale(1.18)"><path d="M-4.1,-2.4l2,-1.8l2.6,1l1,1.6l2.4,1l0.4,2.4l-2.4,2l-5.6,-2z" fill="#f0c01e" stroke="#8a6810" stroke-width="0.55"/><path d="M-2.1,-1.2l2.1,0.9l-0.4,2" fill="none" stroke="#a07c14" stroke-width="0.5"/></g>
<text x="770" y="376.29999999999995" font-size="6.7" fill="#262626" font-weight="normal" text-anchor="start"  xml:space="preserve" textLength="81.35" lengthAdjust="spacingAndGlyphs">(-) 0032_310_MSSF4-6&lt;2&gt; (De</text>
<path d="M750,383.65l1.9,1.7l-1.9,1.7z" fill="#333"/>
<g transform="translate(763,385.34999999999997) scale(1.18)"><path d="M-4.1,-2.4l2,-1.8l2.6,1l1,1.6l2.4,1l0.4,2.4l-2.4,2l-5.6,-2z" fill="#f0c01e" stroke="#8a6810" stroke-width="0.55"/><path d="M-2.1,-1.2l2.1,0.9l-0.4,2" fill="none" stroke="#a07c14" stroke-width="0.5"/></g>
<circle cx="763.4" cy="383.84999999999997" r="2.4" fill="#3a96d8" stroke="#1f5a8a" stroke-width="0.4"/><circle cx="763.4" cy="383.84999999999997" r="0.9" fill="#d6ecfa"/>
<text x="770" y="387.74999999999994" font-size="6.7" fill="#262626" font-weight="normal" text-anchor="start"  xml:space="preserve" textLength="81.37" lengthAdjust="spacingAndGlyphs">0032_007_SCSLAW35-43&lt;1&gt; -</text>
<path d="M750,395.09999999999997l1.9,1.7l-1.9,1.7z" fill="#333"/>
<g transform="translate(763,396.79999999999995) scale(1.18)"><path d="M-4.1,-2.4l2,-1.8l2.6,1l1,1.6l2.4,1l0.4,2.4l-2.4,2l-5.6,-2z" fill="#f0c01e" stroke="#8a6810" stroke-width="0.55"/><path d="M-2.1,-1.2l2.1,0.9l-0.4,2" fill="none" stroke="#a07c14" stroke-width="0.5"/></g>
<text x="770" y="399.19999999999993" font-size="6.7" fill="#262626" font-weight="normal" text-anchor="start"  xml:space="preserve" textLength="81.04" lengthAdjust="spacingAndGlyphs">0032_008_KFSSM8-20&lt;1&gt; (De</text>
</g>
<rect x="850.4" y="254" width="8.8" height="143.5" fill="#f3f3f3" />
<rect x="853.5" y="331" width="1.4" height="66.5" fill="#808080" />
<rect x="859.2" y="253.8" width="152" height="143.8" fill="#c6c9d7" />
<clipPath id="pic"><rect x="859.2" y="253.8" width="152" height="143.8"/></clipPath><g clip-path="url(#pic)"><g transform="translate(860,254) scale(0.22487)">
<polygon points="150,560 215,590 215,660 150,660" fill="#83868d" stroke="#1c1c1c" stroke-width="2.2" stroke-linejoin="round"/>
<polygon points="215,590 262,568 262,660 215,660" fill="#6c6f76" stroke="#1c1c1c" stroke-width="2.2" stroke-linejoin="round"/>
<polygon points="430,578 480,600 480,640 430,620" fill="#83868d" stroke="#1c1c1c" stroke-width="2.2" stroke-linejoin="round"/>
<polygon points="480,600 535,572 535,612 480,640" fill="#74777e" stroke="#1c1c1c" stroke-width="2.2" stroke-linejoin="round"/>
<polygon points="85,522 418,338 646,440 306,630" fill="#dedfe3" stroke="#1c1c1c" stroke-width="2.2" stroke-linejoin="round"/>
<polygon points="85,522 306,630 306,650 85,540" fill="#a9acb4" stroke="#1c1c1c" stroke-width="2.2" stroke-linejoin="round"/>
<polygon points="306,630 646,440 646,458 306,650" fill="#83868d" stroke="#1c1c1c" stroke-width="2.2" stroke-linejoin="round"/>
<ellipse cx="108" cy="512" rx="7" ry="5" fill="#f2f2f2" stroke="#1c1c1c" stroke-width="2"/>
<ellipse cx="238" cy="562" rx="7" ry="5" fill="#f2f2f2" stroke="#1c1c1c" stroke-width="2"/>
<ellipse cx="366" cy="567" rx="7" ry="5" fill="#f2f2f2" stroke="#1c1c1c" stroke-width="2"/>
<ellipse cx="300" cy="617" rx="7" ry="5" fill="#f2f2f2" stroke="#1c1c1c" stroke-width="2"/>
<ellipse cx="622" cy="437" rx="7" ry="5" fill="#f2f2f2" stroke="#1c1c1c" stroke-width="2"/>
<polygon points="455,455 520,420 556,438 490,474" fill="#83868d" stroke="#1c1c1c" stroke-width="2.2" stroke-linejoin="round"/>
<polygon points="470,452 520,426 542,437 492,463" fill="#5e6168" stroke="#1c1c1c" stroke-width="1.5" stroke-linejoin="round"/>
<polygon points="150,392 215,420 215,490 150,462" fill="#a9acb4" stroke="#1c1c1c" stroke-width="2.2" stroke-linejoin="round"/>
<polygon points="215,420 262,398 262,462 215,490" fill="#83868d" stroke="#1c1c1c" stroke-width="2.2" stroke-linejoin="round"/>
<polygon points="108,372 212,318 272,345 165,402" fill="#c2c5cc" stroke="#1c1c1c" stroke-width="2.2" stroke-linejoin="round"/>
<polygon points="108,372 165,402 165,414 108,384" fill="#a9acb4" stroke="#1c1c1c" stroke-width="2.2" stroke-linejoin="round"/>
<polygon points="165,402 272,345 272,357 165,414" fill="#83868d" stroke="#1c1c1c" stroke-width="2.2" stroke-linejoin="round"/>
<ellipse cx="190" cy="352" rx="30" ry="17" fill="#a9acb4" stroke="#1c1c1c" stroke-width="2"/><ellipse cx="190" cy="345" rx="20" ry="11" fill="#dedfe3" stroke="#1c1c1c" stroke-width="2"/>
<ellipse cx="145" cy="378" rx="7" ry="5" fill="#dedfe3" stroke="#1c1c1c" stroke-width="1.6"/><ellipse cx="238" cy="330" rx="7" ry="5" fill="#dedfe3" stroke="#1c1c1c" stroke-width="1.6"/>
<polygon points="180,150 204,150 204,345 180,345" fill="#a9acb4" stroke="#1c1c1c" stroke-width="2" stroke-linejoin="round"/>
<rect x="186" y="150" width="6" height="195" fill="#e4e5e9"/>
<rect x="40" y="30" width="558" height="492" fill="#7fabc2" fill-opacity="0.42"/>
<path d="M228,478 v54 a73,36 0 0 0 146,0 v-54z" fill="#d0d01e" stroke="#4a4a08" stroke-width="2.2"/>
<path d="M228,520 a73,36 0 0 0 146,0" fill="none" stroke="#a4a416" stroke-width="6"/>
<polygon points="128,400 160,415 160,495 128,480" fill="#d0d01e" stroke="#4a4a08" stroke-width="2" stroke-linejoin="round"/>
<polygon points="160,415 176,407 176,488 160,495" fill="#a4a416" stroke="#4a4a08" stroke-width="2" stroke-linejoin="round"/>
<polygon points="236,395 262,383 262,440 236,452" fill="#d0d01e" stroke="#4a4a08" stroke-width="2" stroke-linejoin="round"/>
<path d="M146,118 v14 a27,14 0 0 0 54,0 v-8z" fill="#a4a416" stroke="#4a4a08" stroke-width="2"/>
<path d="M251,176 v14 a50,19 0 0 0 100,0 v-22z" fill="#d0d01e" stroke="#4a4a08" stroke-width="2"/><path d="M318,205 q22,-6 33,-18" fill="none" stroke="#a4a416" stroke-width="5"/>
<polygon points="296,390 420,322 440,338 318,404" fill="#d0d01e" stroke="#4a4a08" stroke-width="2" stroke-linejoin="round"/>
<polygon points="370,402 545,322 590,352 420,440" fill="#e9e924" stroke="#4a4a08" stroke-width="2" stroke-linejoin="round"/>
<polygon points="370,402 420,440 420,452 370,414" fill="#a4a416" stroke="#4a4a08" stroke-width="2" stroke-linejoin="round"/>
<polygon points="420,440 590,352 590,364 420,452" fill="#a4a416" stroke="#4a4a08" stroke-width="2" stroke-linejoin="round"/>
<path d="M424,440v22a8,5 0 0 0 16,0v-22z" fill="#d0d01e" stroke="#4a4a08" stroke-width="1.6"/>
<path d="M454,424v22a8,5 0 0 0 16,0v-22z" fill="#d0d01e" stroke="#4a4a08" stroke-width="1.6"/>
<path d="M540,382v22a8,5 0 0 0 16,0v-22z" fill="#d0d01e" stroke="#4a4a08" stroke-width="1.6"/>
<path d="M564,369v22a8,5 0 0 0 16,0v-22z" fill="#d0d01e" stroke="#4a4a08" stroke-width="1.6"/>
<ellipse cx="396" cy="398" rx="13" ry="8" fill="#d0d01e" stroke="#4a4a08" stroke-width="1.8"/><ellipse cx="396" cy="391" rx="9" ry="5.5" fill="#e9e924" stroke="#4a4a08" stroke-width="1.5"/>
<polygon points="330,440 520,345 548,362 354,464" fill="#e9e924" stroke="#4a4a08" stroke-width="2" stroke-linejoin="round"/>
<path d="M408,322 v34 a68,38 0 0 0 136,0 v-34z" fill="#a4a416" stroke="#4a4a08" stroke-width="2.2"/>
<path d="M414,342v22" stroke="#50500a" stroke-width="3.4"/>
<path d="M425,345v22" stroke="#50500a" stroke-width="3.4"/>
<path d="M436,348v22" stroke="#50500a" stroke-width="3.4"/>
<path d="M447,351v22" stroke="#50500a" stroke-width="3.4"/>
<path d="M458,354v22" stroke="#50500a" stroke-width="3.4"/>
<path d="M469,357v22" stroke="#50500a" stroke-width="3.4"/>
<path d="M480,357v22" stroke="#50500a" stroke-width="3.4"/>
<path d="M491,354v22" stroke="#50500a" stroke-width="3.4"/>
<path d="M502,351v22" stroke="#50500a" stroke-width="3.4"/>
<path d="M513,348v22" stroke="#50500a" stroke-width="3.4"/>
<path d="M524,345v22" stroke="#50500a" stroke-width="3.4"/>
<path d="M535,342v22" stroke="#50500a" stroke-width="3.4"/>
<ellipse cx="476" cy="322" rx="68" ry="38" fill="#e9e924" stroke="#4a4a08" stroke-width="2.2"/><ellipse cx="476" cy="322" rx="55" ry="29" fill="none" stroke="#a4a416" stroke-width="3.5"/><ellipse cx="476" cy="324" rx="13" ry="8" fill="#f6f6f6" stroke="#4a4a08" stroke-width="2"/>
<path d="M232,430 v40 a68,34 0 0 0 136,0 v-40z" fill="#a4a416" stroke="#4a4a08" stroke-width="2.2"/>
<path d="M238,450v22" stroke="#50500a" stroke-width="3.4"/>
<path d="M249,453v22" stroke="#50500a" stroke-width="3.4"/>
<path d="M260,456v22" stroke="#50500a" stroke-width="3.4"/>
<path d="M271,459v22" stroke="#50500a" stroke-width="3.4"/>
<path d="M282,462v22" stroke="#50500a" stroke-width="3.4"/>
<path d="M293,465v22" stroke="#50500a" stroke-width="3.4"/>
<path d="M304,465v22" stroke="#50500a" stroke-width="3.4"/>
<path d="M315,462v22" stroke="#50500a" stroke-width="3.4"/>
<path d="M326,459v22" stroke="#50500a" stroke-width="3.4"/>
<path d="M337,456v22" stroke="#50500a" stroke-width="3.4"/>
<path d="M348,453v22" stroke="#50500a" stroke-width="3.4"/>
<path d="M359,450v22" stroke="#50500a" stroke-width="3.4"/>
<path d="M232,470 a68,34 0 0 0 136,0" fill="none" stroke="#e9e924" stroke-width="7"/>
<ellipse cx="300" cy="428" rx="68" ry="36" fill="#e9e924" stroke="#4a4a08" stroke-width="2.2"/><ellipse cx="300" cy="428" rx="52" ry="26" fill="none" stroke="#a4a416" stroke-width="3.5"/><ellipse cx="300" cy="428" rx="32" ry="16" fill="#ececf0" stroke="#1c1c1c" stroke-width="2"/><ellipse cx="300" cy="426" rx="19" ry="9" fill="#3e3e30"/>
<polygon points="286,198 314,198 314,424 286,424" fill="#d0d01e" stroke="#4a4a08" stroke-width="2" stroke-linejoin="round"/>
<rect x="293" y="199" width="7" height="224" fill="#f4f45a"/><path d="M306,199v224" stroke="#77771a" stroke-width="2.4"/>
<path d="M146,84 L200,48 Q205,45 211,48 L354,125 Q359,128 354,132 L296,169 Q290,172 284,169 L146,92 Q140,88 146,84Z" fill="#d3dde4" stroke="#1c1c1c" stroke-width="2.2"/>
<path d="M141,89 L141,100 Q141,104 146,106 L284,182 Q290,185 296,182 L354,145 Q358,142 358,138 L358,129 Q358,131 354,133 L296,170 Q290,173 284,170 L146,93 Q142,91 141,89Z" fill="#98a6b2" stroke="#1c1c1c" stroke-width="2"/>
<circle cx="198" cy="60" r="2.8" fill="#2a2a2a"/>
<circle cx="220" cy="70" r="2.8" fill="#2a2a2a"/>
<circle cx="160" cy="81" r="2.8" fill="#2a2a2a"/>
<circle cx="182" cy="93" r="2.8" fill="#2a2a2a"/>
<ellipse cx="298" cy="139" rx="21" ry="13.5" fill="#e9e924" stroke="#1c2a66" stroke-width="3"/><ellipse cx="298" cy="138" rx="11" ry="7" fill="#d0d01e" stroke="#4a4a08" stroke-width="2"/><ellipse cx="298" cy="138" rx="4.5" ry="3" fill="#8a8a14"/>
<ellipse cx="328" cy="117" rx="6" ry="4" fill="#98a6b2" stroke="#1c1c1c" stroke-width="1.5"/><ellipse cx="270" cy="151" rx="6" ry="4" fill="#98a6b2" stroke="#1c1c1c" stroke-width="1.5"/>
<rect x="40" y="30" width="558" height="492" fill="none" stroke="#78c8ea" stroke-width="4" stroke-opacity="0.95"/>
<path d="M598,524 v88 l20,-19 l14,32 l14,-7 l-14,-31 l28,-2z" fill="#ffffff" stroke="#111" stroke-width="4.5" stroke-linejoin="round"/>
</g></g>
<rect x="859.3" y="342.8" width="4.2" height="20" fill="#fdfdfd" stroke="#b9b9b9" stroke-width="0.5"/><circle cx="861" cy="353" r="0.8" fill="none" stroke="#888" stroke-width="0.4"/>
<rect x="788.2" y="416.4" width="78.8" height="15.4" rx="7.7" fill="#ffc800"/>
<text x="818" y="427.6" font-size="9.3" font-weight="bold" fill="#1a1a1a" textLength="18.6" lengthAdjust="spacingAndGlyphs">確定</text>
<rect x="893.8" y="416.8" width="77.8" height="14.8" fill="#ffffff" stroke="#c9c9c0" stroke-width="0.9" rx="0.8"/>
<text x="913.69" y="427.4" font-size="7.7" fill="#333" textLength="37.8" lengthAdjust="spacingAndGlyphs">キャンセル</text>
</g>
</svg>
</body></html>
